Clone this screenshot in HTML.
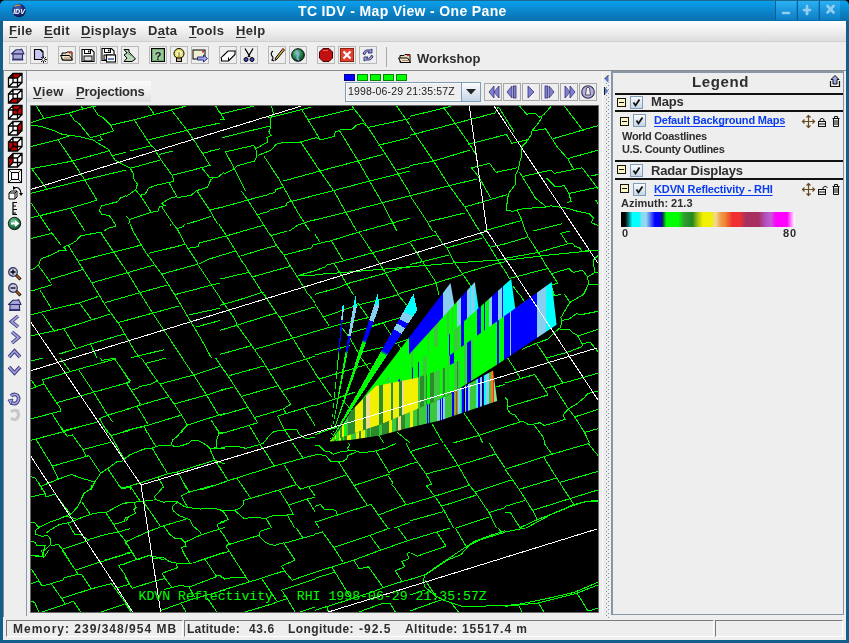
<!DOCTYPE html>
<html><head><meta charset="utf-8">
<style>
*{margin:0;padding:0;box-sizing:border-box}
html,body{width:849px;height:643px;overflow:hidden;background:#135e8b;font-family:"Liberation Sans",sans-serif}
.a{position:absolute}
.mi,.lt,.st,#ttext,#t_combo{will-change:transform}
#title{left:0;top:0;width:849px;height:21px;background:linear-gradient(#0b9fec,#0a86cc 50%,#0b6fae);border-top:1px solid #1a6a90;border-radius:5px 5px 0 0}
#ttext{left:298px;top:3px;white-space:nowrap;color:#fff;font-weight:bold;font-size:14px;letter-spacing:0.35px}
.wb{top:1px;width:21px;height:19px;background:linear-gradient(#2bb0f4,#0d7ec4);border-left:1px solid #0b5f94}
#menubar{left:3px;top:21px;width:843px;height:20px;background:linear-gradient(#ffffff,#f3f3f3 40%,#dedede)}
.mi{top:23px;font-size:13px;font-weight:bold;color:#2e2e2e;letter-spacing:0.3px}
.mi u{text-decoration:underline;text-underline-offset:1.5px;text-decoration-thickness:1px}
#toolbar{left:3px;top:41px;width:843px;height:30px;background:#eeeeee;border-top:1px solid #cfcfcf}
.tb{top:46px;width:18px;height:18px;border:1px solid #b9b9b9;background:#eeeeee}
#main{left:3px;top:70px;width:843px;height:549px;background:#eeeeee;border-top:1px solid #8c8c8c}
#status{left:3px;top:619px;width:843px;height:21px;background:#eeeeee}
.sb{top:620px;height:17px;border-top:1px solid #7a7a7a;border-left:1px solid #7a7a7a;border-right:1px solid #fff;border-bottom:1px solid #fff}
.st{top:622px;font-size:12px;font-weight:bold;color:#2e2e2e;white-space:nowrap}
#map{left:30px;top:105px;width:569px;height:508px;background:#000;border:1px solid #6a6a6a;overflow:hidden}
#legend{left:611px;top:71px;width:233px;height:544px;background:#eeeeee;border-left:2px solid #8797a8;border-top:2px solid #8797a8;border-right:1px solid #8797a8;border-bottom:1px solid #8797a8}
.lt{font-weight:bold;color:#2e2e2e;white-space:nowrap}
.hl{height:2px;background:#111}
.cb{width:13px;height:13px;border:1px solid #7f9db9;background:linear-gradient(#fdfdfd,#c9d8e8)}
.col{width:9px;height:9px;border:1px solid #111;background:#fbf5c0}
</style></head><body>
<div class="a" style="left:0;top:0;width:5px;height:5px;background:#000"></div><div class="a" style="left:844px;top:0;width:5px;height:5px;background:#000"></div>
<div id="title" class="a"></div>
<div id="ttext" class="a"><span id="t_title">TC IDV - Map View - One Pane</span></div>
<div class="a wb" style="left:775px"></div>
<div class="a wb" style="left:797px"></div>
<div class="a wb" style="left:819px"></div>

<div id="menubar" class="a"></div>
<div class="a mi" id="t_file" style="left:9px"><u>F</u>ile</div>
<div class="a mi" id="t_edit" style="left:44px"><u>E</u>dit</div>
<div class="a mi" id="t_disp" style="left:81px"><u>D</u>isplays</div>
<div class="a mi" id="t_data" style="left:148px">D<u>a</u>ta</div>
<div class="a mi" id="t_tools" style="left:189px"><u>T</u>ools</div>
<div class="a mi" id="t_help" style="left:236px"><u>H</u>elp</div>

<div id="toolbar" class="a"></div>
<div class="a tb" style="left:9px"></div>
<div class="a tb" style="left:30px"></div>
<div class="a tb" style="left:58px"></div>
<div class="a tb" style="left:79px"></div>
<div class="a tb" style="left:100px"></div>
<div class="a tb" style="left:121px"></div>
<div class="a tb" style="left:149px"></div>
<div class="a tb" style="left:170px"></div>
<div class="a tb" style="left:191px"></div>
<div class="a tb" style="left:219px"></div>
<div class="a tb" style="left:240px"></div>
<div class="a tb" style="left:268px"></div>
<div class="a tb" style="left:289px"></div>
<div class="a tb" style="left:317px"></div>
<div class="a tb" style="left:338px"></div>
<div class="a tb" style="left:359px"></div>
<div class="a" style="left:386px;top:47px;width:1px;height:20px;background:#a8a8a8"></div>
<div class="a lt" id="t_ws" style="left:417px;top:51px;font-size:13px">Workshop</div>

<div id="main" class="a"></div>
<div class="a" style="left:3px;top:71px;width:1px;height:546px;background:#888"></div>
<div class="a" style="left:26px;top:71px;width:1px;height:545px;background:#8a9aab"></div>
<div class="a" style="left:27px;top:81px;width:124px;height:21px;background:linear-gradient(#fafafa,#f0f0f0 50%,#dcdcdc)"></div>
<div class="a mi" id="t_view" style="left:33px;top:84px"><u>V</u>iew</div>
<div class="a mi" id="t_proj" style="left:76px;top:84px;letter-spacing:-0.2px"><u>P</u>rojections</div>

<div class="a" style="left:602px;top:72px;width:1px;height:544px;background:#fbfbfb"></div>
<div id="map" class="a"></div>
<svg class="a" style="left:31px;top:106px" width="567" height="506" viewBox="31 106 567 506">
<g fill="none" stroke="#00ff00" stroke-width="1" shape-rendering="crispEdges">
<polyline points="36.2,106.0 44.0,118.5"/>
<polyline points="31.1,122.5 44.0,118.5 69.2,113.0 82.6,109.0 95.5,106.0"/>
<polyline points="81.5,106.0 82.6,109.0"/>
<polyline points="69.2,113.0 74.8,120.8 79.2,123.6 90.4,137.6"/>
<polyline points="92.7,106.8 98.3,115.2 102.7,117.4 110.6,125.3 113.4,130.9 99.4,135.3 90.4,137.6"/>
<polyline points="110.6,125.3 125.0,121.9"/>
<polyline points="31.1,125.3 41.2,126.4 54.6,130.9 62.4,134.4 78.1,136.4 92.7,139.8 108.3,149.3 110.6,153.2 115.0,159.9 125.0,165.5 126.0,166.2"/>
<polyline points="126.0,195.7 120.6,198.0 117.3,201.8 101.6,205.8 99.4,210.3 101.6,214.1 109.5,215.9 112.8,220.4 116.2,226.0 108.3,228.2 103.9,231.0"/>
<polyline points="99.4,135.3 102.2,139.8 97.7,140.4"/>
<polyline points="31.1,146.5 58.0,139.8 69.2,135.9"/>
<polyline points="58.0,139.8 72.5,161.1 84.8,180.1 97.1,200.2"/>
<polyline points="30.0,168.9 72.5,161.1 108.3,151.0"/>
<polyline points="125.0,121.9 134.1,119.7 173.2,109.6 185.5,106.2"/>
<polyline points="148.6,106.2 154.2,114.1"/>
<polyline points="171.0,109.6 186.7,129.7 196.7,144.3 200.8,151.0"/>
<polyline points="215.8,106.2 220.0,113.0"/>
<polyline points="111.7,155.9 126.0,152.2"/>
<polyline points="130.5,151.0 152.0,145.4"/>
<polyline points="134.1,119.7 150.9,145.4 157.4,151.0"/>
<polyline points="148.6,139.8 186.7,130.4 220.0,123.0"/>
<polyline points="30.0,193.5 86.0,179.6 126.0,170.0"/>
<polyline points="210.6,151.0 220.0,148.8"/>
<polyline points="31.1,167.8 46.8,189.0"/>
<polyline points="30.0,201.4 50.1,231.0"/>
<polyline points="30.0,218.1 70.3,208.1 97.1,200.2"/>
<polyline points="70.3,208.1 84.8,231.0"/>
<polyline points="170.1,224.0 171.0,226.1"/>
<polyline points="130.3,224.0 133.0,231.0"/>
<polyline points="38.8,485.0 41.2,486.8 45.3,493.8 45.9,496.8"/>
<polyline points="31.2,496.8 41.8,494.4 45.3,493.8"/>
<polyline points="45.9,496.8 55.3,494.2 70.6,514.4"/>
<polyline points="91.2,485.0 91.2,488.5 84.2,493.2 81.8,498.0 80.6,501.5 77.1,507.4 71.2,513.9 65.3,516.2 58.3,519.2 50.0,522.1 40.6,526.8 36.5,529.2 35.3,532.1 35.9,534.5 41.8,536.2 47.7,535.6 50.6,539.2 50.0,545.1 46.5,548.6 43.0,551.0 44.1,556.8 36.5,555.7 31.2,555.7"/>
<polyline points="81.8,501.5 85.4,507.4 90.1,513.9"/>
<polyline points="66.5,516.2 77.1,519.2 93.6,513.3 106.6,512.1 123.1,503.3 130.0,502.1"/>
<polyline points="45.9,533.3 50.6,529.8 59.4,524.5 68.9,522.7 77.1,519.7"/>
<polyline points="31.2,522.1 34.7,522.7 38.2,526.8 40.6,526.8"/>
<polyline points="67.7,522.7 70.0,526.2 74.8,534.5 81.8,535.1 87.7,539.8"/>
<polyline points="87.7,539.8 105.4,534.5 118.3,532.1 130.0,528.6"/>
<polyline points="105.4,512.1 113.6,524.5 118.3,532.1 124.2,539.2 130.0,548.6"/>
<polyline points="113.6,524.5 124.2,521.5 125.4,518.0 130.0,516.2"/>
<polyline points="31.2,541.5 34.7,542.1 37.1,545.7 45.3,545.7 43.0,551.0"/>
<polyline points="51.2,545.7 58.3,544.5 62.4,549.2 88.9,540.4"/>
<polyline points="62.4,549.2 68.9,560.0"/>
<polyline points="105.4,560.0 130.0,552.7"/>
<polyline points="118.3,485.0 121.3,487.9 130.0,486.2"/>
<polyline points="125.0,487.4 130.3,486.2"/>
<polyline points="130.3,486.2 140.3,501.5"/>
<polyline points="162.7,485.0 163.3,486.8 156.8,494.4 154.4,496.8 156.2,499.7"/>
<polyline points="125.0,503.3 140.3,501.5 156.2,499.7"/>
<polyline points="156.2,499.7 163.3,502.1 176.8,501.5 183.9,506.2 187.4,507.4 200.4,509.1 212.2,508.0 222.8,510.3 225.0,513.3"/>
<polyline points="185.1,485.0 189.2,492.1"/>
<polyline points="214.5,485.0 189.2,492.1 181.5,495.6 183.9,500.9 187.4,506.8"/>
<polyline points="134.4,503.3 136.2,507.4 133.8,509.7 135.6,513.3 129.7,516.2 126.2,520.3"/>
<polyline points="143.3,501.5 160.3,526.2"/>
<polyline points="176.8,502.7 172.1,506.8 173.3,510.9 179.2,515.6 189.8,519.7 193.3,526.2 200.4,532.1 201.6,535.1"/>
<polyline points="125.0,542.1 148.6,531.5 163.9,525.6 186.2,519.2"/>
<polyline points="163.9,526.2 169.8,534.5 174.5,538.0 180.4,538.0 185.1,542.7 186.2,546.2 181.5,547.4 183.9,553.3 187.4,560.0"/>
<polyline points="185.1,542.1 200.4,535.1 219.2,529.2 225.0,527.4"/>
<polyline points="216.9,524.5 225.0,521.5"/>
<polyline points="216.9,524.5 219.2,529.2 225.0,536.8"/>
<polyline points="125.0,542.1 132.1,552.1 136.8,560.0"/>
<polyline points="125.0,553.3 132.1,552.1"/>
<polyline points="136.8,560.0 148.6,555.7 155.6,556.8 163.9,560.0"/>
<polyline points="201.6,560.0 225.0,552.1"/>
<polyline points="31.2,555.3 38.2,556.5 44.1,557.1 48.8,550.0"/>
<polyline points="41.8,550.0 42.4,554.7 44.1,557.1"/>
<polyline points="61.8,550.0 75.9,570.6 78.3,574.7"/>
<polyline points="75.9,570.0 103.0,561.2 130.0,552.9"/>
<polyline points="31.2,568.8 42.4,585.9"/>
<polyline points="31.2,583.6 38.2,581.2 42.4,585.9"/>
<polyline points="42.4,585.9 51.2,583.6 63.0,580.0 64.2,577.7 78.3,574.1 81.8,574.7 91.2,588.9"/>
<polyline points="51.2,583.6 62.4,599.5 65.3,604.2"/>
<polyline points="61.8,598.3 91.2,588.9 111.3,583.6"/>
<polyline points="111.3,583.6 124.2,600.6 130.0,610.1"/>
<polyline points="118.3,565.3 124.2,564.1 130.0,561.8"/>
<polyline points="118.3,565.3 124.2,573.6 128.9,583.0"/>
<polyline points="117.2,587.7 130.0,584.2"/>
<polyline points="31.2,601.2 34.7,602.4 38.8,612.0"/>
<polyline points="41.8,612.0 65.3,604.2 73.6,601.2 80.6,612.0"/>
<polyline points="100.7,612.0 124.2,604.2"/>
<polyline points="130.3,550.0 136.8,559.4"/>
<polyline points="125.0,563.5 136.8,559.4 149.1,555.3 154.4,558.8 162.7,557.1 169.8,561.8 176.2,563.0 177.4,567.7 162.7,573.0"/>
<polyline points="125.0,553.5 130.3,552.4"/>
<polyline points="182.1,550.0 184.5,554.7 189.8,563.0"/>
<polyline points="176.8,563.5 192.7,563.0 205.1,558.8 225.0,552.4"/>
<polyline points="205.1,559.4 215.7,575.3 220.4,575.3 225.0,579.4"/>
<polyline points="162.1,573.6 165.6,578.9 172.1,587.7"/>
<polyline points="125.0,577.1 132.1,588.3"/>
<polyline points="132.1,588.3 154.4,581.2 165.6,578.3"/>
<polyline points="163.9,589.5 180.4,585.3 189.2,587.1 216.9,576.5"/>
<polyline points="189.2,587.1 194.5,597.1"/>
<polyline points="160.3,610.7 191.0,599.5 225.0,590.0"/>
<polyline points="125.0,603.0 130.9,612.0"/>
<polyline points="181.5,604.2 186.2,612.0"/>
<polyline points="207.4,598.3 216.9,612.0"/>
<polyline points="220.0,114.1 253.6,106.2"/>
<polyline points="220.0,112.5 224.0,119.2 220.0,120.1"/>
<polyline points="271.5,106.2 273.7,114.1"/>
<polyline points="268.1,117.9 310.6,107.4"/>
<polyline points="222.2,137.6 270.4,125.9"/>
<polyline points="273.7,114.1 270.4,118.5 271.0,126.4 268.8,132.0 271.0,135.3 267.0,137.6 267.4,142.0 255.8,148.8 256.9,155.5 254.7,161.1 237.9,165.5 232.3,170.0 224.0,173.8"/>
<polyline points="253.6,145.4 224.5,152.1"/>
<polyline points="253.6,145.4 255.8,148.8"/>
<polyline points="258.0,155.5 271.5,149.9 276.0,144.3 284.9,142.0 291.6,142.5 300.6,142.0 316.2,137.6 320.7,139.8 334.1,136.5 335.3,132.0 340.9,129.7 352.1,129.1 356.5,125.3 362.1,123.0 367.7,126.4"/>
<polyline points="301.7,109.6 319.6,138.7"/>
<polyline points="352.1,106.2 363.2,120.8 368.8,128.6 385.6,154.4 399.1,175.6 410.0,193.5"/>
<polyline points="396.8,106.2 410.0,125.3"/>
<polyline points="339.7,130.9 358.8,162.2 372.2,185.7 383.4,204.7 396.8,230.9"/>
<polyline points="300.6,142.0 318.5,168.9 334.1,191.3 345.3,211.4 356.5,230.9"/>
<polyline points="263.6,155.5 278.2,177.9 287.1,193.5 297.2,211.4 309.5,230.9"/>
<polyline points="225.6,152.1 235.7,171.1 245.7,191.0"/>
<polyline points="308.4,119.7 353.2,108.9"/>
<polyline points="367.7,127.5 410.0,118.5"/>
<polyline points="377.8,145.4 410.0,137.6"/>
<polyline points="282.7,181.2 319.6,171.1 357.6,161.1 383.4,154.4"/>
<polyline points="396.8,170.0 410.0,166.7"/>
<polyline points="269.0,194.1 274.8,192.4 276.0,189.5 282.7,187.3"/>
<polyline points="269.0,210.4 286.0,205.8 287.1,202.5 330.8,191.3 368.8,181.2 410.0,171.1"/>
<polyline points="289.4,230.9 298.3,224.9 308.4,221.5 345.3,212.5 383.4,202.5 410.0,195.8"/>
<polyline points="363.2,230.9 410.0,218.1"/>
<polyline points="410.0,116.3 451.4,106.2"/>
<polyline points="443.6,107.4 454.8,123.0 470.4,145.4 477.1,156.6"/>
<polyline points="410.0,135.3 495.0,113.0 498.4,106.7"/>
<polyline points="498.4,106.7 514.1,132.0"/>
<polyline points="468.2,144.3 507.4,134.2"/>
<polyline points="519.7,106.2 526.4,114.1 535.3,113.4 539.8,117.4 544.3,114.1 551.0,106.2"/>
<polyline points="542.1,117.4 537.6,124.1 532.0,130.9 530.9,135.3 526.4,142.0 521.9,146.5 521.9,155.5 519.7,162.2 518.5,168.9 515.2,175.6 515.2,184.6 508.5,193.5 507.4,200.2 506.2,210.3 513.0,211.4 519.7,209.2 530.9,208.1 546.5,207.0 551.0,205.8 566.7,208.1 577.9,211.4 589.1,213.7 593.5,218.1 591.3,222.6 599.1,226.0"/>
<polyline points="410.0,126.4 433.5,161.1 449.2,185.7 464.8,207.0 479.4,230.9"/>
<polyline points="410.0,195.8 427.9,222.6 432.4,230.9"/>
<polyline points="410.0,165.5 433.5,161.1 470.4,149.9"/>
<polyline points="471.5,167.8 479.4,177.9 490.6,198.0"/>
<polyline points="471.5,167.8 489.5,163.3 496.2,172.3 517.4,167.8"/>
<polyline points="410.0,195.8 449.2,185.7 477.1,179.0"/>
<polyline points="464.8,207.0 507.4,194.6"/>
<polyline points="429.0,221.5 464.8,213.0"/>
<polyline points="483.9,230.9 521.9,220.4"/>
<polyline points="517.4,210.3 521.9,220.4 525.3,230.9"/>
<polyline points="506.2,134.2 511.8,143.2 527.5,139.8"/>
<polyline points="553.2,138.7 599.1,125.3"/>
<polyline points="545.4,128.6 557.7,147.6 567.8,158.8 573.4,168.9"/>
<polyline points="582.3,167.8 599.1,190.2"/>
<polyline points="564.4,106.2 583.5,130.9"/>
<polyline points="532.0,130.9 546.5,128.6"/>
<polyline points="566.7,158.8 599.1,149.9"/>
<polyline points="521.9,176.7 551.0,170.0 554.4,173.4 582.3,167.8"/>
<polyline points="546.5,177.9 551.0,182.3 555.5,186.8 564.4,185.7 568.9,193.5 571.1,201.4 566.7,202.5"/>
<polyline points="519.7,172.3 535.3,198.0 546.5,207.0"/>
<polyline points="568.9,193.5 599.1,186.8"/>
<polyline points="591.3,175.6 599.1,174.5"/>
<polyline points="595.8,200.2 599.1,205.8"/>
<polyline points="533.1,230.9 562.2,223.7"/>
<polyline points="30.0,238.8 52.4,233.2"/>
<polyline points="51.3,232.1 61.3,245.5"/>
<polyline points="30.0,270.2 34.5,268.6 39.0,264.1 40.7,259.0 52.4,254.5 60.2,250.0 66.9,250.7 63.6,247.1 70.3,244.4 75.9,241.1 80.4,235.9 88.2,234.4 101.6,232.1"/>
<polyline points="100.5,232.1 113.9,252.3 127.4,272.4 139.7,292.5 153.1,313.8 164.3,330.6 182.2,357.9"/>
<polyline points="133.0,231.0 146.4,253.4 162.1,274.6 175.5,295.9 186.7,314.9 204.6,345.1 211.3,357.9"/>
<polyline points="197.5,264.0 197.9,264.6 220.2,298.1"/>
<polyline points="68.0,244.9 81.5,266.8 91.5,282.5 105.0,304.9 119.5,325.0 135.2,351.9 139.7,357.9"/>
<polyline points="37.8,264.6 51.3,283.6"/>
<polyline points="40.1,290.3 51.3,308.2"/>
<polyline points="42.3,313.8 54.6,331.7"/>
<polyline points="63.6,328.4 75.9,348.5"/>
<polyline points="79.2,302.6 91.5,319.4"/>
<polyline points="90.4,344.0 97.1,357.9"/>
<polyline points="78.1,261.2 141.9,244.9"/>
<polyline points="148.6,253.4 171.0,247.9"/>
<polyline points="51.3,279.1 82.6,269.5"/>
<polyline points="91.5,282.9 154.2,265.0"/>
<polyline points="162.1,274.0 198.3,264.0"/>
<polyline points="30.0,291.4 52.4,284.7"/>
<polyline points="105.0,302.6 166.5,285.2"/>
<polyline points="174.4,294.8 220.0,282.9"/>
<polyline points="30.0,314.9 80.4,302.6 98.3,296.4"/>
<polyline points="117.3,322.8 178.8,306.0"/>
<polyline points="188.9,314.9 220.0,308.2"/>
<polyline points="30.0,336.2 64.7,328.4 109.5,314.3"/>
<polyline points="59.1,354.1 90.4,344.0 124.0,334.0"/>
<polyline points="130.7,357.9 164.3,349.6"/>
<polyline points="195.6,327.2 220.0,320.5"/>
<polyline points="244.4,264.0 249.1,272.4 252.4,276.9 263.6,295.0"/>
<polyline points="269.0,233.2 271.5,236.0 276.5,245.5 284.3,255.6 290.5,266.2 303.3,286.4 308.4,295.0"/>
<polyline points="271.5,235.5 287.1,231.0"/>
<polyline points="269.0,247.6 276.5,245.5"/>
<polyline points="284.3,255.0 311.7,247.8 312.8,245.0 315.0,244.4"/>
<polyline points="220.0,279.1 248.5,272.4"/>
<polyline points="252.4,276.9 290.5,266.2"/>
<polyline points="297.7,275.7 315.0,270.7"/>
<polyline points="298.3,275.7 315.0,275.2"/>
<polyline points="253.6,295.0 263.6,292.0"/>
<polyline points="315.0,234.4 320.0,242.2"/>
<polyline points="315.0,244.4 331.8,240.5 358.6,232.1 362.0,231.0"/>
<polyline points="358.6,231.6 372.6,252.8 385.5,272.9 398.3,294.2"/>
<polyline points="331.2,240.5 343.0,260.1"/>
<polyline points="315.0,270.7 325.6,266.8 326.2,265.1 334.0,263.4 372.6,252.8 410.0,242.2"/>
<polyline points="334.0,263.4 340.7,274.1 353.6,295.0"/>
<polyline points="315.0,274.6 338.5,272.9 377.6,269.6 410.0,267.0"/>
<polyline points="347.4,283.6 384.4,273.5 402.2,267.9 410.0,266.2"/>
<polyline points="315.0,294.2 337.4,288.0 347.4,283.6"/>
<polyline points="398.9,293.6 410.0,290.3"/>
<polyline points="220.0,298.5 228.9,310.2 235.7,320.8 236.8,324.8 251.3,344.9 260.3,358.0"/>
<polyline points="220.0,305.2 234.5,301.3 256.9,294.0"/>
<polyline points="264.2,294.0 265.9,297.4 275.9,312.5 279.8,317.5 292.7,338.2 305.0,358.0"/>
<polyline points="220.0,330.4 236.8,325.3 275.9,313.0"/>
<polyline points="279.8,317.5 315.0,306.9"/>
<polyline points="220.0,354.4 251.9,345.5"/>
<polyline points="254.7,349.4 292.7,338.2 315.0,331.5"/>
<polyline points="308.4,294.0 315.0,302.9"/>
<polyline points="309.5,358.0 315.0,356.1"/>
<polyline points="315.0,304.1 329.5,326.4"/>
<polyline points="323.9,316.9 355.3,305.7 382.1,299.0 398.9,294.6"/>
<polyline points="397.8,294.6 406.7,305.2"/>
<polyline points="357.5,302.9 368.7,318.0"/>
<polyline points="315.0,331.5 340.7,324.2 368.7,317.5"/>
<polyline points="372.0,325.9 401.1,317.5"/>
<polyline points="340.7,326.4 349.7,337.6 358.6,353.3"/>
<polyline points="383.2,323.1 391.1,334.8"/>
<polyline points="350.8,332.6 365.3,328.7 383.2,323.1"/>
<polyline points="315.0,355.0 349.7,345.5"/>
<polyline points="362.0,352.2 385.5,346.6 410.0,338.7"/>
<polyline points="397.8,344.3 402.2,349.9"/>
<polyline points="434.6,231.0 442.4,243.3 446.9,247.8 454.7,262.9 462.6,274.1 471.0,286.4"/>
<polyline points="410.0,241.6 436.3,234.9"/>
<polyline points="446.9,247.8 481.6,238.3"/>
<polyline points="480.5,232.1 490.0,247.2 498.4,261.2 505.0,270.7"/>
<polyline points="410.6,243.3 424.5,264.6 435.7,281.9 439.1,295.0"/>
<polyline points="490.0,247.2 505.0,243.9"/>
<polyline points="410.0,264.6 449.1,255.0"/>
<polyline points="410.0,266.8 454.7,262.9 505.0,259.5"/>
<polyline points="462.6,273.5 497.2,263.4 505.0,261.8"/>
<polyline points="410.0,290.3 432.4,284.1 462.6,274.6"/>
<polyline points="525.7,231.0 527.9,236.6 538.6,252.8 547.5,267.9 557.6,283.0 551.4,285.3"/>
<polyline points="505.0,243.9 527.4,237.2"/>
<polyline points="505.0,258.4 538.6,252.3 567.6,243.9 572.7,243.3 574.9,246.7 578.8,247.2 582.2,251.1 597.8,250.6"/>
<polyline points="505.0,260.3 552.0,254.7 587.8,251.1 598.0,250.0"/>
<polyline points="560.9,233.2 569.9,231.0"/>
<polyline points="560.9,233.2 567.1,243.3"/>
<polyline points="505.0,270.7 509.5,278.5"/>
<polyline points="509.5,278.5 547.5,268.5"/>
<polyline points="552.0,273.5 568.8,268.5 573.2,272.4 582.2,270.1 587.8,276.9 594.5,272.9 598.0,272.4"/>
<polyline points="587.8,276.9 588.3,284.7 583.3,295.0"/>
<polyline points="594.5,272.4 593.4,260.1 598.0,255.6"/>
<polyline points="588.3,284.7 598.0,284.1"/>
<polyline points="512.8,285.8 519.5,295.0"/>
<polyline points="550.9,285.3 554.2,295.0"/>
<polyline points="519.5,294.0 525.7,303.5"/>
<polyline points="553.1,295.7 560.9,294.6"/>
<polyline points="564.3,294.0 569.9,302.4"/>
<polyline points="569.9,302.4 583.3,294.6"/>
<polyline points="569.9,302.4 560.9,317.5 562.0,321.4 560.4,327.6 554.2,332.6 547.5,339.3 536.3,343.2 521.8,349.4"/>
<polyline points="562.0,320.3 568.8,319.2 576.6,313.6 581.1,314.7 598.0,311.3"/>
<polyline points="560.4,329.8 568.8,329.2 573.2,333.1 578.8,335.9 598.0,329.2"/>
<polyline points="577.7,335.9 582.2,344.3 583.3,346.6"/>
<polyline points="536.3,343.2 546.4,358.0"/>
<polyline points="582.2,343.8 590.0,342.1 598.0,351.6"/>
<polyline points="546.4,358.0 567.6,352.2 582.2,346.6"/>
<polyline points="31.2,360.9 43.0,358.0"/>
<polyline points="60.0,358.0 70.0,371.0"/>
<polyline points="100.7,358.0 101.8,360.4 116.0,358.0"/>
<polyline points="42.4,379.8 78.3,369.2 114.8,359.2"/>
<polyline points="114.8,359.2 123.1,371.0 130.0,381.6"/>
<polyline points="31.2,379.8 35.9,386.9"/>
<polyline points="31.2,388.6 44.1,383.9"/>
<polyline points="42.4,379.8 44.1,383.9"/>
<polyline points="44.1,383.9 56.5,402.8 60.6,408.6 60.6,411.6"/>
<polyline points="78.3,369.2 93.6,392.2 107.7,415.1 112.4,421.6"/>
<polyline points="56.5,402.8 93.6,392.2 130.0,382.1"/>
<polyline points="126.6,382.7 130.0,388.6"/>
<polyline points="31.2,418.7 51.8,413.4 60.6,411.0"/>
<polyline points="51.8,413.4 63.0,431.0 64.2,433.0"/>
<polyline points="99.5,418.7 107.7,415.1 130.0,408.6"/>
<polyline points="61.8,431.0 97.1,422.2"/>
<polyline points="99.5,418.7 107.7,433.0"/>
<polyline points="120.7,433.0 130.0,429.8"/>
<polyline points="141.5,358.0 156.8,380.4 160.3,384.5 174.5,404.5 181.5,415.1 187.4,425.1 183.3,428.7 181.5,433.0"/>
<polyline points="146.2,363.3 166.2,358.0"/>
<polyline points="182.1,358.0 193.3,374.5 206.3,394.5 218.6,415.1"/>
<polyline points="215.7,358.0 225.0,372.1"/>
<polyline points="125.0,373.3 130.3,381.0 126.2,382.7"/>
<polyline points="126.2,382.7 140.3,403.9 137.4,406.9 148.0,424.0"/>
<polyline points="132.1,389.2 136.8,388.9 140.3,386.3 150.3,384.5 156.8,381.0"/>
<polyline points="160.3,383.9 193.3,375.1 220.4,366.2"/>
<polyline points="125.0,409.8 140.3,405.1 168.6,396.9"/>
<polyline points="174.5,403.9 206.3,395.1 225.0,389.2"/>
<polyline points="125.0,431.0 144.4,426.3 181.5,415.1"/>
<polyline points="187.4,425.1 218.6,415.1 225.0,413.4"/>
<polyline points="144.4,426.3 146.8,433.0"/>
<polyline points="211.0,419.8 219.2,433.0"/>
<polyline points="59.4,425.0 64.2,431.5 67.1,436.2 72.4,435.0 83.0,449.7 85.9,455.6"/>
<polyline points="31.2,440.3 64.2,431.5 85.4,425.0"/>
<polyline points="35.9,439.1 52.4,466.2 58.3,479.2"/>
<polyline points="82.4,449.7 111.3,442.1"/>
<polyline points="103.0,425.0 111.3,436.2 124.2,459.2"/>
<polyline points="111.3,435.6 130.0,430.3"/>
<polyline points="52.4,466.2 88.9,455.6 100.7,473.3 94.8,482.1 90.7,490.0"/>
<polyline points="124.2,459.2 130.0,454.4"/>
<polyline points="31.2,476.8 34.7,477.4 41.2,486.8 41.8,490.0"/>
<polyline points="41.2,486.2 58.3,479.2 71.2,474.5 83.0,478.6 94.8,482.1"/>
<polyline points="100.7,473.3 107.7,468.6 117.2,461.5 123.1,460.9"/>
<polyline points="107.7,468.6 121.3,488.6 130.0,487.4"/>
<polyline points="125.0,430.9 143.8,426.2 146.8,425.0"/>
<polyline points="143.8,426.2 155.6,446.2"/>
<polyline points="187.4,425.0 182.7,429.7 176.8,436.8 172.7,439.7 171.5,444.4 174.5,446.8 178.0,446.8 188.6,443.3 191.5,440.3 198.0,440.3 207.4,445.6 209.8,448.6 214.5,459.7 225.0,475.6"/>
<polyline points="125.0,458.6 130.9,454.4 143.8,449.1 152.1,448.0 159.2,445.6 171.5,445.0"/>
<polyline points="152.1,448.0 167.4,473.3"/>
<polyline points="136.8,483.9 167.4,473.9 176.8,472.1 214.5,460.3"/>
<polyline points="214.5,460.3 225.0,463.9"/>
<polyline points="209.8,449.1 225.0,448.0"/>
<polyline points="214.5,425.0 219.2,432.1 216.9,439.1 216.3,447.4 209.8,449.1"/>
<polyline points="219.2,433.2 225.0,432.1"/>
<polyline points="176.8,472.1 180.4,476.8 187.4,490.0"/>
<polyline points="125.0,487.4 136.8,483.9"/>
<polyline points="129.7,486.2 130.9,490.0"/>
<polyline points="158.0,477.4 163.9,487.4"/>
<polyline points="200.4,490.0 225.0,482.1"/>
<polyline points="220.7,365.3 227.9,375.8 241.1,396.3 254.3,417.4 257.6,422.7 249.1,425.4"/>
<polyline points="261.0,358.0 264.9,364.6 278.1,385.7 290.7,404.2 283.4,408.9 286.1,413.5 277.5,416.1"/>
<polyline points="228.6,375.8 264.3,365.9"/>
<polyline points="270.2,369.9 307.2,358.7 309.8,358.0"/>
<polyline points="306.5,359.3 315.0,372.5"/>
<polyline points="220.0,390.4 233.2,387.1"/>
<polyline points="241.8,396.3 278.1,385.7"/>
<polyline points="282.7,390.4 315.0,381.1"/>
<polyline points="220.0,415.5 247.7,407.5"/>
<polyline points="255.0,417.4 282.1,409.5"/>
<polyline points="286.1,413.5 315.0,404.9"/>
<polyline points="304.5,408.9 315.0,425.4"/>
<polyline points="220.0,434.0 249.1,425.4"/>
<polyline points="249.1,425.4 259.6,442.9"/>
<polyline points="277.5,416.1 284.7,430.0 292.0,441.2"/>
<polyline points="263.6,442.9 268.9,435.9 274.2,431.3 284.7,430.0 296.6,429.3 299.3,434.6 305.9,438.6 315.0,437.3"/>
<polyline points="315.0,373.2 332.2,397.6"/>
<polyline points="319.0,379.1 370.5,363.3"/>
<polyline points="361.2,358.0 370.5,371.2"/>
<polyline points="315.0,405.6 354.6,392.3"/>
<polyline points="342.7,400.3 352.0,410.8"/>
<polyline points="315.0,434.6 337.5,426.7"/>
<polyline points="378.4,434.6 383.7,442.9"/>
<polyline points="396.9,432.0 410.0,442.9"/>
<polyline points="220.0,448.3 227.9,446.3 239.8,447.0 245.8,448.3 259.6,444.6 263.6,443.0"/>
<polyline points="259.6,444.3 264.3,450.3 274.2,466.1"/>
<polyline points="292.7,443.0 303.2,458.2"/>
<polyline points="220.0,483.3 274.2,466.1 315.0,454.9"/>
<polyline points="220.0,467.4 227.9,480.6"/>
<polyline points="237.2,478.7 250.4,497.8"/>
<polyline points="284.1,464.8 296.0,484.0 300.6,489.2 308.5,486.6 315.0,485.3"/>
<polyline points="243.1,500.5 279.4,489.9 296.0,484.6"/>
<polyline points="279.4,490.6 288.7,505.1 293.3,514.3 287.4,515.0"/>
<polyline points="288.7,505.1 307.2,499.1 315.0,497.2"/>
<polyline points="308.5,486.6 315.0,495.8"/>
<polyline points="307.2,499.1 315.0,511.7"/>
<polyline points="243.1,500.5 243.8,504.4 239.8,508.4 234.5,510.4 222.6,511.0 220.0,510.4"/>
<polyline points="222.6,511.0 225.3,514.3 228.6,519.6 220.0,522.3"/>
<polyline points="234.5,510.4 243.8,518.3 254.3,517.6 266.2,518.3 274.2,515.0 287.4,515.0 293.3,514.3"/>
<polyline points="266.2,518.3 271.5,527.9"/>
<polyline points="287.4,515.0 294.6,527.9"/>
<polyline points="315.0,445.0 319.0,445.6 324.2,450.9 329.5,451.6 333.5,454.2 341.4,451.6 354.6,450.3 361.2,452.9 375.8,450.9 385.0,448.3 395.6,443.7"/>
<polyline points="348.7,443.0 349.3,445.6 347.4,448.3 348.7,450.3"/>
<polyline points="315.0,454.2 325.6,455.5 330.9,461.5 342.7,461.5 346.7,458.9 348.0,455.5 357.3,451.6"/>
<polyline points="338.8,462.2 346.7,474.7 367.2,505.1"/>
<polyline points="375.8,450.9 389.6,473.4"/>
<polyline points="387.7,475.4 392.9,482.6 391.6,484.6 394.3,487.3 406.1,504.4"/>
<polyline points="315.0,485.3 346.7,474.7"/>
<polyline points="354.6,485.3 389.6,474.0"/>
<polyline points="389.6,471.4 410.0,464.1"/>
<polyline points="406.1,443.0 410.0,450.9"/>
<polyline points="315.0,506.4 320.3,504.4 324.2,509.1 332.2,509.1 336.1,511.0 337.5,515.0"/>
<polyline points="315.0,522.3 337.5,515.0 371.1,504.4"/>
<polyline points="371.1,504.4 378.4,515.0 387.7,527.9"/>
<polyline points="378.4,515.0 406.1,504.4 410.0,503.8"/>
<polyline points="315.0,520.9 319.0,527.9"/>
<polyline points="394.3,527.9 410.0,522.3"/>
<polyline points="220.7,530.7 229.4,544.1 226.0,546.1"/>
<polyline points="226.0,545.4 258.8,535.4"/>
<polyline points="258.8,535.4 260.2,531.3 270.2,528.0"/>
<polyline points="258.8,535.4 264.2,541.4 269.5,544.1 274.9,545.4 283.6,542.7 295.0,560.1"/>
<polyline points="283.6,543.4 303.0,538.0 315.0,534.7"/>
<polyline points="296.3,528.0 303.0,538.0"/>
<polyline points="220.0,554.1 228.7,551.4"/>
<polyline points="226.0,546.1 248.8,581.5"/>
<polyline points="220.0,576.2 224.0,578.2 246.8,577.5"/>
<polyline points="220.0,590.9 261.5,578.2 284.3,570.8"/>
<polyline points="295.0,560.1 281.6,566.2 284.3,570.8 292.3,580.2 315.0,572.2"/>
<polyline points="261.5,578.2 273.5,596.3 276.9,601.0"/>
<polyline points="281.6,590.2 285.6,596.3 295.0,611.9"/>
<polyline points="281.6,590.2 315.0,578.9"/>
<polyline points="245.4,611.9 270.9,604.3 285.6,599.0"/>
<polyline points="300.3,611.9 315.0,607.0"/>
<polyline points="315.0,534.0 322.4,532.0 333.7,547.4 343.1,562.1"/>
<polyline points="333.7,547.4 369.9,535.4 390.0,528.0"/>
<polyline points="369.9,535.4 380.6,550.1"/>
<polyline points="398.0,528.0 407.4,540.7"/>
<polyline points="315.0,572.2 353.8,560.1 380.6,550.1 410.0,540.0"/>
<polyline points="353.8,560.1 359.2,568.8 368.5,566.8 383.3,587.6"/>
<polyline points="315.0,578.2 335.1,572.2"/>
<polyline points="331.7,566.8 335.1,572.2 350.5,597.6"/>
<polyline points="383.3,587.6 402.0,581.5 410.0,579.5"/>
<polyline points="402.0,581.5 395.3,570.8 404.7,566.8 402.0,561.5 408.7,558.8 407.4,553.4 410.0,552.1"/>
<polyline points="315.0,610.3 351.1,599.0 375.2,590.9 383.3,587.6"/>
<polyline points="327.0,607.0 328.4,611.9"/>
<polyline points="359.2,611.9 381.9,603.6 390.0,603.0 395.3,611.9"/>
<polyline points="431.8,423.4 443.0,442.9"/>
<polyline points="464.2,413.5 478.7,434.6 482.7,442.9"/>
<polyline points="453.6,442.9 481.3,434.6 505.0,426.7"/>
<polyline points="495.9,387.1 505.0,384.4"/>
<polyline points="507.6,358.0 516.2,371.2 520.2,378.5"/>
<polyline points="505.0,383.1 534.7,374.5"/>
<polyline points="534.7,374.5 547.9,394.3"/>
<polyline points="546.0,358.0 549.9,363.3 563.1,383.1"/>
<polyline points="546.0,388.4 563.1,383.1 584.3,377.2 598.0,373.2"/>
<polyline points="553.9,386.4 568.4,408.9 575.0,417.4 584.3,432.0 589.5,442.9"/>
<polyline points="507.6,406.9 547.9,395.0"/>
<polyline points="505.0,397.6 507.6,400.3 507.6,409.5 510.3,413.5 514.9,414.8 519.5,421.4 524.8,422.1 527.5,424.1 533.4,424.1 540.0,422.7 544.0,425.4 549.9,424.1 565.1,419.4 563.1,414.8 568.4,408.9 576.3,404.2 584.3,397.6 587.6,393.7 598.0,391.0"/>
<polyline points="505.0,426.7 519.5,422.1"/>
<polyline points="533.4,424.1 543.3,437.3 544.6,442.9"/>
<polyline points="575.0,416.8 598.0,409.5"/>
<polyline points="584.3,432.6 598.0,428.7"/>
<polyline points="410.0,451.6 438.4,443.0"/>
<polyline points="410.7,452.2 425.9,474.0 431.8,484.0 426.5,485.9 434.4,495.8 441.7,506.4 453.6,527.9"/>
<polyline points="410.0,464.1 416.6,462.2"/>
<polyline points="444.3,444.3 458.2,465.5 469.4,485.3 475.4,492.5 489.3,513.0 496.5,527.9"/>
<polyline points="425.9,474.0 458.2,465.5 495.2,454.2"/>
<polyline points="489.3,443.0 495.9,454.2 505.0,468.1"/>
<polyline points="410.0,503.8 433.8,496.5 469.4,485.3"/>
<polyline points="475.4,491.9 505.0,482.0"/>
<polyline points="441.0,506.4 476.1,495.2"/>
<polyline points="410.0,520.9 443.0,511.7"/>
<polyline points="489.3,512.4 505.0,507.7"/>
<polyline points="456.2,527.9 489.3,517.0"/>
<polyline points="544.0,443.0 551.9,454.2"/>
<polyline points="505.0,469.4 551.9,454.2 588.2,443.7"/>
<polyline points="588.2,443.7 598.0,455.5"/>
<polyline points="505.7,470.1 519.5,489.9 533.4,511.7 537.4,519.6"/>
<polyline points="544.0,457.5 559.2,482.0 573.7,504.4"/>
<polyline points="505.0,482.0 511.6,480.0"/>
<polyline points="519.5,489.2 556.5,478.0"/>
<polyline points="559.2,482.6 598.0,471.4"/>
<polyline points="505.0,506.4 524.8,500.5"/>
<polyline points="532.7,510.4 568.4,499.1 598.0,489.9"/>
<polyline points="505.0,513.0 510.3,512.4 519.5,526.9"/>
<polyline points="519.5,527.9 537.4,519.6 551.2,514.3 564.4,509.1 573.7,504.4 589.5,501.1 598.0,500.5"/>
<polyline points="526.1,527.9 539.3,520.9 553.9,513.0 567.1,507.7 584.3,501.8 598.0,501.1"/>
<polyline points="410.0,540.0 436.8,532.0 450.2,528.0"/>
<polyline points="436.8,532.0 446.1,546.1"/>
<polyline points="410.7,552.8 417.4,556.1 446.1,546.1"/>
<polyline points="455.5,528.0 466.2,546.7"/>
<polyline points="424.7,574.9 442.1,562.8 454.2,554.8 466.2,546.7 474.3,541.4 490.3,535.4 505.0,530.7"/>
<polyline points="426.1,574.2 447.5,560.1 460.9,554.8 468.9,545.4 479.6,540.0 501.0,533.4 505.0,532.7"/>
<polyline points="410.0,579.5 424.7,574.9"/>
<polyline points="424.7,574.9 423.4,581.5 424.7,586.9 434.1,594.9 443.5,600.3 462.2,606.3 474.3,607.0 490.3,605.6 505.0,605.0"/>
<polyline points="424.7,579.5 436.8,597.6"/>
<polyline points="410.0,594.9 424.7,590.2"/>
<polyline points="410.0,611.0 443.5,599.0"/>
<polyline points="451.5,603.0 458.2,611.9"/>
<polyline points="498.4,528.0 502.4,534.0"/>
<polyline points="505.0,532.0 525.1,528.0"/>
<polyline points="505.0,605.6 518.4,604.3 545.2,599.0 574.6,592.3 598.0,582.2"/>
<polyline points="505.0,606.3 538.5,603.0 576.0,593.6 598.0,584.9"/>
<polyline points="518.4,604.3 521.7,611.9"/>
<polyline points="538.5,603.0 543.8,611.9"/>
<polyline points="577.3,593.6 588.0,611.0 598.0,608.3"/>
<polyline points="218.8,224.0 226.5,235.9 243.6,264.0"/>
<polyline points="241.4,191.0 247.7,200.0 257.2,214.7 269.0,233.2"/>
<polyline points="224.0,206.7 247.7,200.0 269.0,194.4"/>
<polyline points="257.2,214.7 269.0,211.5"/>
<polyline points="173.4,224.0 177.1,228.9 185.3,244.2 198.2,264.0"/>
<polyline points="177.1,228.9 183.0,226.5 184.6,224.0"/>
<polyline points="171.0,248.0 185.3,244.2"/>
<polyline points="188.8,248.3 198.3,246.5 199.4,243.0 226.5,235.9 263.1,225.3"/>
<polyline points="198.7,264.0 207.7,259.5 234.8,251.2"/>
<polyline points="240.7,256.0 269.0,247.4"/>
<polyline points="126.0,165.9 130.3,168.3"/>
<polyline points="130.3,168.3 160.3,160.0"/>
<polyline points="155.6,151.2 161.5,160.6 172.1,175.3 173.9,180.6"/>
<polyline points="158.6,154.7 172.9,151.0"/>
<polyline points="201.1,151.0 202.7,153.5 209.8,165.3 201.6,167.7"/>
<polyline points="202.7,153.5 211.1,151.0"/>
<polyline points="172.1,175.3 201.6,167.7"/>
<polyline points="201.6,167.7 209.8,177.7 218.1,177.1 224.0,172.1"/>
<polyline points="130.3,168.3 133.2,173.6 133.8,178.9 137.4,184.2 135.6,190.0 128.5,194.8 126.0,197.3"/>
<polyline points="135.6,190.0 140.3,195.3 150.9,211.8"/>
<polyline points="140.3,195.3 145.0,194.2 148.6,188.3 155.6,185.3 169.2,182.4 173.9,181.2"/>
<polyline points="169.2,183.0 176.8,196.5"/>
<polyline points="176.8,196.5 169.8,198.3 161.5,203.6 165.0,205.4 159.2,207.1 158.0,211.2 150.9,212.4 143.8,214.8 129.7,219.5 126.0,215.8"/>
<polyline points="176.8,197.1 180.9,197.1 191.0,195.3 196.8,190.6 207.4,187.1 211.0,179.4 213.3,178.3"/>
<polyline points="161.5,206.5 173.2,224.0"/>
<polyline points="196.8,190.6 209.8,210.1 217.5,224.0"/>
<polyline points="209.8,210.1 224.0,206.7"/>
<polyline points="187.1,224.0 211.0,216.5"/>
<polyline points="129.7,219.5 128.7,224.0"/>
</g>
<defs>
<linearGradient id="gs0" gradientUnits="userSpaceOnUse" x1="330" y1="441.4" x2="343" y2="300.3"><stop offset="0" stop-color="#00ff00"/><stop offset="0.62" stop-color="#00ff00"/><stop offset="0.64" stop-color="#0000ff"/><stop offset="0.86" stop-color="#0000ff"/><stop offset="0.86" stop-color="#87cef0"/><stop offset="0.94" stop-color="#87cef0"/><stop offset="0.94" stop-color="#00ffff"/><stop offset="1" stop-color="#00ffff"/></linearGradient>
<linearGradient id="gs1" gradientUnits="userSpaceOnUse" x1="330" y1="441.4" x2="355.3" y2="295"><stop offset="0" stop-color="#00ff00"/><stop offset="0.6" stop-color="#00ff00"/><stop offset="0.62" stop-color="#0000ff"/><stop offset="0.72" stop-color="#0000ff"/><stop offset="0.72" stop-color="#87cef0"/><stop offset="0.92" stop-color="#87cef0"/><stop offset="0.92" stop-color="#00ffff"/><stop offset="1" stop-color="#00ffff"/></linearGradient>
<linearGradient id="gs2" gradientUnits="userSpaceOnUse" x1="330" y1="441.4" x2="377.7" y2="293.8"><stop offset="0" stop-color="#00ff00"/><stop offset="0.67" stop-color="#00ff00"/><stop offset="0.69" stop-color="#0000ff"/><stop offset="0.82" stop-color="#0000ff"/><stop offset="0.82" stop-color="#87cef0"/><stop offset="0.93" stop-color="#87cef0"/><stop offset="0.93" stop-color="#00ffff"/><stop offset="1" stop-color="#00ffff"/></linearGradient>
<linearGradient id="gs3" gradientUnits="userSpaceOnUse" x1="330" y1="441.4" x2="413.6" y2="293.8"><stop offset="0" stop-color="#00ff00"/><stop offset="0.6" stop-color="#00ff00"/><stop offset="0.62" stop-color="#0000ff"/><stop offset="0.76" stop-color="#0000ff"/><stop offset="0.76" stop-color="#87cef0"/><stop offset="0.8" stop-color="#87cef0"/><stop offset="0.8" stop-color="#0000ff"/><stop offset="0.83" stop-color="#0000ff"/><stop offset="0.83" stop-color="#87cef0"/><stop offset="0.88" stop-color="#87cef0"/><stop offset="0.88" stop-color="#00ffff"/><stop offset="1" stop-color="#00ffff"/></linearGradient>
<clipPath id="c0"><polygon points="330.0,441.4 450.5,283.0 454.5,306.0"/></clipPath>
<clipPath id="c1"><polygon points="330.0,441.4 474.8,282.0 479.0,311.0"/></clipPath>
<clipPath id="c2"><polygon points="330.0,441.4 511.2,279.0 516.2,315.5"/></clipPath>
<clipPath id="c8"><polygon points="330.0,441.4 551.7,282.0 556.6,324.7 496.5,365.0 457.0,390.0 440.0,399.2 410.0,412.0 380.0,424.7 352.0,434.0"/></clipPath>
<clipPath id="cy"><polygon points="330.0,441.4 340.0,430.0 351.0,411.0 376.0,386.0 416.0,378.0 440.0,370.0 460.0,360.0 460.0,388.0 422.0,408.0 380.0,424.7 352.0,434.0"/></clipPath>
<clipPath id="c9"><polygon points="330.0,441.4 352.0,434.0 380.0,424.7 410.0,412.0 440.0,399.2 493.2,370.5 497.2,401.0 440.0,420.4 410.0,427.5 380.0,435.5 352.0,439.7"/></clipPath>
</defs>
<g shape-rendering="crispEdges"><polygon points="330.0,441.4 343.0,300.3 343.9,308.6" fill="url(#gs0)"/>
<polygon points="330.0,441.4 355.3,295.0 356.9,306.2" fill="url(#gs1)"/>
<polygon points="330.0,441.4 377.7,293.8 379.5,305.6" fill="url(#gs2)"/>
<polygon points="330.0,441.4 413.6,293.8 417.2,310.3" fill="url(#gs3)"/>
<g clip-path="url(#c0)"><rect x="330" y="270" width="2" height="180" fill="#3cc83c"/><rect x="332" y="270" width="2" height="180" fill="#00ff00"/><rect x="334" y="270" width="1" height="180" fill="#00ff00"/><rect x="335" y="270" width="1" height="180" fill="#00ff00"/><rect x="336" y="270" width="1" height="180" fill="#3cc83c"/><rect x="337" y="270" width="1" height="180" fill="#00ff00"/><rect x="338" y="270" width="2" height="180" fill="#00ff00"/><rect x="340" y="270" width="1" height="180" fill="#00ff00"/><rect x="341" y="270" width="2" height="180" fill="#00ff00"/><rect x="343" y="270" width="3" height="180" fill="#00ff00"/><rect x="346" y="270" width="1" height="180" fill="#00ff00"/><rect x="347" y="270" width="3" height="180" fill="#3cc83c"/><rect x="350" y="270" width="3" height="180" fill="#00ff00"/><rect x="353" y="270" width="1" height="180" fill="#3cc83c"/><rect x="354" y="270" width="1" height="180" fill="#00ff00"/><rect x="355" y="270" width="1" height="180" fill="#00ff00"/><rect x="356" y="270" width="1" height="180" fill="#00ff00"/><rect x="357" y="270" width="3" height="180" fill="#00ff00"/><rect x="360" y="270" width="4" height="180" fill="#00ff00"/><rect x="364" y="270" width="3" height="180" fill="#00ff00"/><rect x="367" y="270" width="1" height="180" fill="#00ff00"/><rect x="368" y="270" width="3" height="180" fill="#00ff00"/><rect x="371" y="270" width="3" height="180" fill="#00ff00"/><rect x="374" y="270" width="1" height="180" fill="#00ff00"/><rect x="375" y="270" width="3" height="180" fill="#00ff00"/><rect x="378" y="270" width="2" height="180" fill="#00ff00"/><rect x="380" y="270" width="2" height="180" fill="#00ff00"/><rect x="382" y="270" width="1" height="180" fill="#00ff00"/><rect x="383" y="270" width="4" height="180" fill="#00ff00"/><rect x="387" y="270" width="1" height="180" fill="#00ff00"/><rect x="388" y="270" width="3" height="180" fill="#00ff00"/><rect x="391" y="270" width="2" height="180" fill="#00ff00"/><rect x="393" y="270" width="2" height="180" fill="#00ff00"/><rect x="395" y="270" width="1" height="180" fill="#00ff00"/><rect x="396" y="270" width="2" height="180" fill="#00ff00"/><rect x="398" y="270" width="2" height="180" fill="#00ff00"/><rect x="400" y="270" width="2" height="180" fill="#00ff00"/><rect x="402" y="270" width="4" height="180" fill="#00ff00"/><rect x="406" y="270" width="3" height="180" fill="#00ff00"/><rect x="409" y="270" width="2" height="180" fill="#0000ff"/><rect x="411" y="270" width="2" height="180" fill="#0000ff"/><rect x="413" y="270" width="3" height="180" fill="#0000ff"/><rect x="416" y="270" width="1" height="180" fill="#0000ff"/><rect x="417" y="270" width="2" height="180" fill="#0000ff"/><rect x="419" y="270" width="4" height="180" fill="#0000ff"/><rect x="423" y="270" width="4" height="180" fill="#0000ff"/><rect x="427" y="270" width="4" height="180" fill="#0000ff"/><rect x="431" y="270" width="4" height="180" fill="#0000ff"/><rect x="435" y="270" width="2" height="180" fill="#0000ff"/><rect x="437" y="270" width="4" height="180" fill="#0000ff"/><rect x="441" y="270" width="2" height="180" fill="#0000ff"/><rect x="443" y="270" width="3" height="180" fill="#87cef0"/><rect x="446" y="270" width="1" height="180" fill="#87cef0"/><rect x="447" y="270" width="2" height="180" fill="#87cef0"/><rect x="449" y="270" width="1" height="180" fill="#87cef0"/><rect x="450" y="270" width="2" height="180" fill="#87cef0"/><rect x="452" y="270" width="2" height="180" fill="#87cef0"/><rect x="454" y="270" width="2" height="180" fill="#00ffff"/><rect x="456" y="270" width="2" height="180" fill="#00ffff"/></g>
<g clip-path="url(#c1)"><rect x="330" y="270" width="2" height="180" fill="#00ff00"/><rect x="332" y="270" width="2" height="180" fill="#00ff00"/><rect x="334" y="270" width="2" height="180" fill="#3cc83c"/><rect x="336" y="270" width="1" height="180" fill="#00ff00"/><rect x="337" y="270" width="1" height="180" fill="#00ff00"/><rect x="338" y="270" width="1" height="180" fill="#00ff00"/><rect x="339" y="270" width="3" height="180" fill="#00ff00"/><rect x="342" y="270" width="2" height="180" fill="#00ff00"/><rect x="344" y="270" width="2" height="180" fill="#00ff00"/><rect x="346" y="270" width="3" height="180" fill="#00ff00"/><rect x="349" y="270" width="1" height="180" fill="#00ff00"/><rect x="350" y="270" width="3" height="180" fill="#3cc83c"/><rect x="353" y="270" width="4" height="180" fill="#00ff00"/><rect x="357" y="270" width="1" height="180" fill="#00ff00"/><rect x="358" y="270" width="4" height="180" fill="#00ff00"/><rect x="362" y="270" width="2" height="180" fill="#00ff00"/><rect x="364" y="270" width="2" height="180" fill="#00ff00"/><rect x="366" y="270" width="4" height="180" fill="#00ff00"/><rect x="370" y="270" width="1" height="180" fill="#00ff00"/><rect x="371" y="270" width="1" height="180" fill="#00ff00"/><rect x="372" y="270" width="1" height="180" fill="#00ff00"/><rect x="373" y="270" width="1" height="180" fill="#00ff00"/><rect x="374" y="270" width="3" height="180" fill="#00ff00"/><rect x="377" y="270" width="1" height="180" fill="#3cc83c"/><rect x="378" y="270" width="3" height="180" fill="#00ff00"/><rect x="381" y="270" width="1" height="180" fill="#00ff00"/><rect x="382" y="270" width="1" height="180" fill="#00ff00"/><rect x="383" y="270" width="2" height="180" fill="#00ff00"/><rect x="385" y="270" width="2" height="180" fill="#00ff00"/><rect x="387" y="270" width="2" height="180" fill="#3cc83c"/><rect x="389" y="270" width="2" height="180" fill="#00ff00"/><rect x="391" y="270" width="2" height="180" fill="#00ff00"/><rect x="393" y="270" width="1" height="180" fill="#00ff00"/><rect x="394" y="270" width="4" height="180" fill="#00ff00"/><rect x="398" y="270" width="4" height="180" fill="#00ff00"/><rect x="402" y="270" width="1" height="180" fill="#00ff00"/><rect x="403" y="270" width="3" height="180" fill="#00ff00"/><rect x="406" y="270" width="4" height="180" fill="#00ff00"/><rect x="410" y="270" width="1" height="180" fill="#00ff00"/><rect x="411" y="270" width="2" height="180" fill="#3cc83c"/><rect x="413" y="270" width="1" height="180" fill="#00ff00"/><rect x="414" y="270" width="2" height="180" fill="#00ff00"/><rect x="416" y="270" width="1" height="180" fill="#00ff00"/><rect x="417" y="270" width="1" height="180" fill="#00ff00"/><rect x="418" y="270" width="3" height="180" fill="#00ff00"/><rect x="421" y="270" width="1" height="180" fill="#00ff00"/><rect x="422" y="270" width="1" height="180" fill="#00ff00"/><rect x="423" y="270" width="2" height="180" fill="#00ff00"/><rect x="425" y="270" width="1" height="180" fill="#00ff00"/><rect x="426" y="270" width="2" height="180" fill="#00ff00"/><rect x="428" y="270" width="1" height="180" fill="#3cc83c"/><rect x="429" y="270" width="2" height="180" fill="#00ff00"/><rect x="431" y="270" width="1" height="180" fill="#00ff00"/><rect x="432" y="270" width="2" height="180" fill="#00ff00"/><rect x="434" y="270" width="4" height="180" fill="#3cc83c"/><rect x="438" y="270" width="2" height="180" fill="#00ff00"/><rect x="440" y="270" width="1" height="180" fill="#00ff00"/><rect x="441" y="270" width="1" height="180" fill="#00ff00"/><rect x="442" y="270" width="2" height="180" fill="#00ff00"/><rect x="444" y="270" width="3" height="180" fill="#00ff00"/><rect x="447" y="270" width="2" height="180" fill="#3cc83c"/><rect x="449" y="270" width="2" height="180" fill="#00ff00"/><rect x="451" y="270" width="1" height="180" fill="#00ff00"/><rect x="452" y="270" width="1" height="180" fill="#3cc83c"/><rect x="453" y="270" width="4" height="180" fill="#00ff00"/><rect x="457" y="270" width="2" height="180" fill="#87cef0"/><rect x="459" y="270" width="2" height="180" fill="#87cef0"/><rect x="461" y="270" width="2" height="180" fill="#0000ff"/><rect x="463" y="270" width="4" height="180" fill="#0000ff"/><rect x="467" y="270" width="2" height="180" fill="#87cef0"/><rect x="469" y="270" width="1" height="180" fill="#87cef0"/><rect x="470" y="270" width="1" height="180" fill="#00ffff"/><rect x="471" y="270" width="1" height="180" fill="#87cef0"/><rect x="472" y="270" width="2" height="180" fill="#87cef0"/><rect x="474" y="270" width="1" height="180" fill="#87cef0"/><rect x="475" y="270" width="3" height="180" fill="#00ffff"/><rect x="478" y="270" width="4" height="180" fill="#00ffff"/></g>
<g clip-path="url(#c2)"><rect x="330" y="270" width="1" height="180" fill="#00ff00"/><rect x="331" y="270" width="1" height="180" fill="#00ff00"/><rect x="332" y="270" width="4" height="180" fill="#00ff00"/><rect x="336" y="270" width="3" height="180" fill="#00ff00"/><rect x="339" y="270" width="1" height="180" fill="#00ff00"/><rect x="340" y="270" width="1" height="180" fill="#3cc83c"/><rect x="341" y="270" width="1" height="180" fill="#00ff00"/><rect x="342" y="270" width="1" height="180" fill="#00ff00"/><rect x="343" y="270" width="1" height="180" fill="#00ff00"/><rect x="344" y="270" width="2" height="180" fill="#00ff00"/><rect x="346" y="270" width="2" height="180" fill="#3cc83c"/><rect x="348" y="270" width="1" height="180" fill="#0000ff"/><rect x="349" y="270" width="2" height="180" fill="#3cc83c"/><rect x="351" y="270" width="4" height="180" fill="#00ff00"/><rect x="355" y="270" width="3" height="180" fill="#00ff00"/><rect x="358" y="270" width="3" height="180" fill="#00ff00"/><rect x="361" y="270" width="1" height="180" fill="#00ff00"/><rect x="362" y="270" width="1" height="180" fill="#3cc83c"/><rect x="363" y="270" width="1" height="180" fill="#00ff00"/><rect x="364" y="270" width="1" height="180" fill="#00ff00"/><rect x="365" y="270" width="2" height="180" fill="#00ff00"/><rect x="367" y="270" width="1" height="180" fill="#00ff00"/><rect x="368" y="270" width="2" height="180" fill="#00ff00"/><rect x="370" y="270" width="3" height="180" fill="#00ff00"/><rect x="373" y="270" width="1" height="180" fill="#3cc83c"/><rect x="374" y="270" width="1" height="180" fill="#00ff00"/><rect x="375" y="270" width="2" height="180" fill="#00ff00"/><rect x="377" y="270" width="1" height="180" fill="#00ff00"/><rect x="378" y="270" width="3" height="180" fill="#00ff00"/><rect x="381" y="270" width="1" height="180" fill="#00ff00"/><rect x="382" y="270" width="3" height="180" fill="#0000ff"/><rect x="385" y="270" width="3" height="180" fill="#00ff00"/><rect x="388" y="270" width="4" height="180" fill="#00ff00"/><rect x="392" y="270" width="3" height="180" fill="#00ff00"/><rect x="395" y="270" width="2" height="180" fill="#00ff00"/><rect x="397" y="270" width="1" height="180" fill="#00ff00"/><rect x="398" y="270" width="2" height="180" fill="#0000ff"/><rect x="400" y="270" width="1" height="180" fill="#3cc83c"/><rect x="401" y="270" width="1" height="180" fill="#00ff00"/><rect x="402" y="270" width="2" height="180" fill="#00ff00"/><rect x="404" y="270" width="1" height="180" fill="#00ff00"/><rect x="405" y="270" width="2" height="180" fill="#00ff00"/><rect x="407" y="270" width="4" height="180" fill="#00ff00"/><rect x="411" y="270" width="1" height="180" fill="#3cc83c"/><rect x="412" y="270" width="1" height="180" fill="#0000ff"/><rect x="413" y="270" width="4" height="180" fill="#00ff00"/><rect x="417" y="270" width="1" height="180" fill="#00ff00"/><rect x="418" y="270" width="1" height="180" fill="#0000ff"/><rect x="419" y="270" width="1" height="180" fill="#00ff00"/><rect x="420" y="270" width="1" height="180" fill="#00ff00"/><rect x="421" y="270" width="2" height="180" fill="#00ff00"/><rect x="423" y="270" width="4" height="180" fill="#3cc83c"/><rect x="427" y="270" width="1" height="180" fill="#00ff00"/><rect x="428" y="270" width="3" height="180" fill="#00ff00"/><rect x="431" y="270" width="2" height="180" fill="#00ff00"/><rect x="433" y="270" width="2" height="180" fill="#00ff00"/><rect x="435" y="270" width="2" height="180" fill="#00ff00"/><rect x="437" y="270" width="3" height="180" fill="#00ff00"/><rect x="440" y="270" width="4" height="180" fill="#00ff00"/><rect x="444" y="270" width="2" height="180" fill="#00ff00"/><rect x="446" y="270" width="2" height="180" fill="#00ff00"/><rect x="448" y="270" width="1" height="180" fill="#00ff00"/><rect x="449" y="270" width="1" height="180" fill="#0000ff"/><rect x="450" y="270" width="1" height="180" fill="#00ff00"/><rect x="451" y="270" width="2" height="180" fill="#00ff00"/><rect x="453" y="270" width="1" height="180" fill="#00ff00"/><rect x="454" y="270" width="1" height="180" fill="#3cc83c"/><rect x="455" y="270" width="4" height="180" fill="#3cc83c"/><rect x="459" y="270" width="2" height="180" fill="#00ff00"/><rect x="461" y="270" width="3" height="180" fill="#0000ff"/><rect x="464" y="270" width="3" height="180" fill="#00ff00"/><rect x="467" y="270" width="2" height="180" fill="#00ff00"/><rect x="469" y="270" width="1" height="180" fill="#00ff00"/><rect x="470" y="270" width="1" height="180" fill="#00ff00"/><rect x="471" y="270" width="1" height="180" fill="#00ff00"/><rect x="472" y="270" width="1" height="180" fill="#00ff00"/><rect x="473" y="270" width="2" height="180" fill="#00ff00"/><rect x="475" y="270" width="1" height="180" fill="#00ff00"/><rect x="476" y="270" width="1" height="180" fill="#00ff00"/><rect x="477" y="270" width="2" height="180" fill="#0000ff"/><rect x="479" y="270" width="2" height="180" fill="#0000ff"/><rect x="481" y="270" width="2" height="180" fill="#00ff00"/><rect x="483" y="270" width="1" height="180" fill="#00ff00"/><rect x="484" y="270" width="1" height="180" fill="#0000ff"/><rect x="485" y="270" width="1" height="180" fill="#00ff00"/><rect x="486" y="270" width="1" height="180" fill="#00ff00"/><rect x="487" y="270" width="2" height="180" fill="#00ff00"/><rect x="489" y="270" width="3" height="180" fill="#87cef0"/><rect x="492" y="270" width="2" height="180" fill="#0000ff"/><rect x="494" y="270" width="4" height="180" fill="#0000ff"/><rect x="498" y="270" width="2" height="180" fill="#87cef0"/><rect x="500" y="270" width="2" height="180" fill="#87cef0"/><rect x="502" y="270" width="1" height="180" fill="#0000ff"/><rect x="503" y="270" width="3" height="180" fill="#00ffff"/><rect x="506" y="270" width="3" height="180" fill="#00ffff"/><rect x="509" y="270" width="2" height="180" fill="#00ffff"/><rect x="511" y="270" width="4" height="180" fill="#00ffff"/><rect x="515" y="270" width="2" height="180" fill="#00ffff"/><rect x="517" y="270" width="2" height="180" fill="#87cef0"/></g>
<g clip-path="url(#c8)"><rect x="330" y="270" width="2" height="180" fill="#f0f000"/><rect x="332" y="270" width="1" height="180" fill="#00ff00"/><rect x="333" y="270" width="4" height="180" fill="#2c8c2c"/><rect x="337" y="270" width="1" height="180" fill="#00ff00"/><rect x="338" y="270" width="2" height="180" fill="#2c8c2c"/><rect x="340" y="270" width="1" height="180" fill="#00ff00"/><rect x="341" y="270" width="4" height="180" fill="#2c8c2c"/><rect x="345" y="270" width="2" height="180" fill="#f0f000"/><rect x="347" y="270" width="1" height="180" fill="#00ff00"/><rect x="348" y="270" width="2" height="180" fill="#2c8c2c"/><rect x="350" y="270" width="4" height="180" fill="#2c8c2c"/><rect x="354" y="270" width="3" height="180" fill="#00ff00"/><rect x="357" y="270" width="2" height="180" fill="#00ff00"/><rect x="359" y="270" width="1" height="180" fill="#00ff00"/><rect x="360" y="270" width="2" height="180" fill="#00ff00"/><rect x="362" y="270" width="2" height="180" fill="#2c8c2c"/><rect x="364" y="270" width="3" height="180" fill="#00ff00"/><rect x="367" y="270" width="1" height="180" fill="#2c8c2c"/><rect x="368" y="270" width="2" height="180" fill="#00ff00"/><rect x="370" y="270" width="1" height="180" fill="#00ff00"/><rect x="371" y="270" width="2" height="180" fill="#00ff00"/><rect x="373" y="270" width="2" height="180" fill="#3cc83c"/><rect x="375" y="270" width="1" height="180" fill="#00ff00"/><rect x="376" y="270" width="1" height="180" fill="#00ff00"/><rect x="377" y="270" width="1" height="180" fill="#00ff00"/><rect x="378" y="270" width="3" height="180" fill="#00ff00"/><rect x="381" y="270" width="1" height="180" fill="#00ff00"/><rect x="382" y="270" width="4" height="180" fill="#00ff00"/><rect x="386" y="270" width="3" height="180" fill="#2c8c2c"/><rect x="389" y="270" width="1" height="180" fill="#3cc83c"/><rect x="390" y="270" width="4" height="180" fill="#3cc83c"/><rect x="394" y="270" width="3" height="180" fill="#00ff00"/><rect x="397" y="270" width="2" height="180" fill="#3cc83c"/><rect x="399" y="270" width="2" height="180" fill="#00ff00"/><rect x="401" y="270" width="4" height="180" fill="#3cc83c"/><rect x="405" y="270" width="1" height="180" fill="#00ff00"/><rect x="406" y="270" width="4" height="180" fill="#2c8c2c"/><rect x="410" y="270" width="4" height="180" fill="#00ff00"/><rect x="414" y="270" width="4" height="180" fill="#3cc83c"/><rect x="418" y="270" width="1" height="180" fill="#0000ff"/><rect x="419" y="270" width="3" height="180" fill="#00ff00"/><rect x="422" y="270" width="1" height="180" fill="#3cc83c"/><rect x="423" y="270" width="3" height="180" fill="#3cc83c"/><rect x="426" y="270" width="4" height="180" fill="#00ff00"/><rect x="430" y="270" width="4" height="180" fill="#00ff00"/><rect x="434" y="270" width="1" height="180" fill="#00ff00"/><rect x="435" y="270" width="1" height="180" fill="#00ff00"/><rect x="436" y="270" width="1" height="180" fill="#00ff00"/><rect x="437" y="270" width="2" height="180" fill="#00ff00"/><rect x="439" y="270" width="4" height="180" fill="#00ff00"/><rect x="443" y="270" width="3" height="180" fill="#00ff00"/><rect x="446" y="270" width="2" height="180" fill="#00ff00"/><rect x="448" y="270" width="2" height="180" fill="#3cc83c"/><rect x="450" y="270" width="4" height="180" fill="#0000ff"/><rect x="454" y="270" width="3" height="180" fill="#00ff00"/><rect x="457" y="270" width="3" height="180" fill="#00ff00"/><rect x="460" y="270" width="4" height="180" fill="#00ff00"/><rect x="464" y="270" width="1" height="180" fill="#3cc83c"/><rect x="465" y="270" width="1" height="180" fill="#3cc83c"/><rect x="466" y="270" width="1" height="180" fill="#00ff00"/><rect x="467" y="270" width="4" height="180" fill="#0000ff"/><rect x="471" y="270" width="2" height="180" fill="#3cc83c"/><rect x="473" y="270" width="1" height="180" fill="#00ff00"/><rect x="474" y="270" width="4" height="180" fill="#00ff00"/><rect x="478" y="270" width="1" height="180" fill="#00ff00"/><rect x="479" y="270" width="4" height="180" fill="#00ff00"/><rect x="483" y="270" width="3" height="180" fill="#00ff00"/><rect x="486" y="270" width="2" height="180" fill="#00ff00"/><rect x="488" y="270" width="4" height="180" fill="#00ff00"/><rect x="492" y="270" width="3" height="180" fill="#00ff00"/><rect x="495" y="270" width="2" height="180" fill="#00ff00"/><rect x="497" y="270" width="2" height="180" fill="#0000ff"/><rect x="499" y="270" width="1" height="180" fill="#00ff00"/><rect x="500" y="270" width="4" height="180" fill="#00ff00"/><rect x="504" y="270" width="4" height="180" fill="#0000ff"/><rect x="508" y="270" width="2" height="180" fill="#0000ff"/><rect x="510" y="270" width="1" height="180" fill="#87cef0"/><rect x="511" y="270" width="3" height="180" fill="#0000ff"/><rect x="514" y="270" width="1" height="180" fill="#0000ff"/><rect x="515" y="270" width="1" height="180" fill="#0000ff"/><rect x="516" y="270" width="1" height="180" fill="#0000ff"/><rect x="517" y="270" width="2" height="180" fill="#0000ff"/><rect x="519" y="270" width="2" height="180" fill="#0000ff"/><rect x="521" y="270" width="1" height="180" fill="#0000ff"/><rect x="522" y="270" width="1" height="180" fill="#0000ff"/><rect x="523" y="270" width="3" height="180" fill="#0000ff"/><rect x="526" y="270" width="2" height="180" fill="#0000ff"/><rect x="528" y="270" width="4" height="180" fill="#0000ff"/><rect x="532" y="270" width="1" height="180" fill="#0000ff"/><rect x="533" y="270" width="1" height="180" fill="#0000ff"/><rect x="534" y="270" width="2" height="180" fill="#0000ff"/><rect x="536" y="270" width="1" height="180" fill="#0000ff"/><rect x="537" y="270" width="2" height="180" fill="#87cef0"/><rect x="539" y="270" width="2" height="180" fill="#87cef0"/><rect x="541" y="270" width="1" height="180" fill="#87cef0"/><rect x="542" y="270" width="2" height="180" fill="#87cef0"/><rect x="544" y="270" width="2" height="180" fill="#87cef0"/><rect x="546" y="270" width="2" height="180" fill="#00ffff"/><rect x="548" y="270" width="1" height="180" fill="#00ffff"/><rect x="549" y="270" width="1" height="180" fill="#00ffff"/><rect x="550" y="270" width="4" height="180" fill="#00ffff"/><rect x="554" y="270" width="2" height="180" fill="#00ffff"/><rect x="556" y="270" width="2" height="180" fill="#00ffff"/></g>
<g clip-path="url(#cy)"><rect x="330" y="270" width="3" height="180" fill="#f0f000"/><rect x="333" y="270" width="2" height="180" fill="#00ff00"/><rect x="335" y="270" width="1" height="180" fill="#f0f000"/><rect x="336" y="270" width="1" height="180" fill="#3cc83c"/><rect x="337" y="270" width="2" height="180" fill="#00ff00"/><rect x="339" y="270" width="1" height="180" fill="#f0f000"/><rect x="340" y="270" width="2" height="180" fill="#2c8c2c"/><rect x="342" y="270" width="2" height="180" fill="#f0f000"/><rect x="344" y="270" width="2" height="180" fill="#00ff00"/><rect x="346" y="270" width="2" height="180" fill="#3cc83c"/><rect x="348" y="270" width="4" height="180" fill="#2c8c2c"/><rect x="352" y="270" width="3" height="180" fill="#2c8c2c"/><rect x="355" y="270" width="4" height="180" fill="#f0f000"/><rect x="359" y="270" width="4" height="180" fill="#f0f000"/><rect x="363" y="270" width="3" height="180" fill="#2c8c2c"/><rect x="366" y="270" width="4" height="180" fill="#f0dc8c"/><rect x="370" y="270" width="2" height="180" fill="#f0f000"/><rect x="372" y="270" width="3" height="180" fill="#f0f000"/><rect x="375" y="270" width="2" height="180" fill="#f0f000"/><rect x="377" y="270" width="2" height="180" fill="#f0f000"/><rect x="379" y="270" width="4" height="180" fill="#2c8c2c"/><rect x="383" y="270" width="4" height="180" fill="#f0f000"/><rect x="387" y="270" width="4" height="180" fill="#f0f000"/><rect x="391" y="270" width="2" height="180" fill="#2c8c2c"/><rect x="393" y="270" width="2" height="180" fill="#f0f000"/><rect x="395" y="270" width="4" height="180" fill="#f0f000"/><rect x="399" y="270" width="1" height="180" fill="#2c8c2c"/><rect x="400" y="270" width="2" height="180" fill="#2c8c2c"/><rect x="402" y="270" width="2" height="180" fill="#f0dc8c"/><rect x="404" y="270" width="2" height="180" fill="#f0f000"/><rect x="406" y="270" width="3" height="180" fill="#f0f000"/><rect x="409" y="270" width="1" height="180" fill="#f0f000"/><rect x="410" y="270" width="3" height="180" fill="#f0f000"/><rect x="413" y="270" width="1" height="180" fill="#f0f000"/><rect x="414" y="270" width="3" height="180" fill="#f0f000"/><rect x="417" y="270" width="1" height="180" fill="#f0f000"/><rect x="418" y="270" width="2" height="180" fill="#3cc83c"/><rect x="420" y="270" width="4" height="180" fill="#2c8c2c"/><rect x="424" y="270" width="2" height="180" fill="#3cc83c"/><rect x="426" y="270" width="1" height="180" fill="#2c8c2c"/><rect x="427" y="270" width="3" height="180" fill="#00ff00"/><rect x="430" y="270" width="1" height="180" fill="#2c8c2c"/><rect x="431" y="270" width="3" height="180" fill="#2c8c2c"/><rect x="434" y="270" width="1" height="180" fill="#3cc83c"/><rect x="435" y="270" width="1" height="180" fill="#3cc83c"/><rect x="436" y="270" width="4" height="180" fill="#3cc83c"/><rect x="440" y="270" width="2" height="180" fill="#00ff00"/><rect x="442" y="270" width="1" height="180" fill="#3cc83c"/><rect x="443" y="270" width="2" height="180" fill="#2c8c2c"/><rect x="445" y="270" width="2" height="180" fill="#00ff00"/><rect x="447" y="270" width="2" height="180" fill="#3cc83c"/><rect x="449" y="270" width="2" height="180" fill="#00ff00"/><rect x="451" y="270" width="3" height="180" fill="#00ff00"/><rect x="454" y="270" width="2" height="180" fill="#3cc83c"/><rect x="456" y="270" width="1" height="180" fill="#3cc83c"/><rect x="457" y="270" width="1" height="180" fill="#2c8c2c"/><rect x="458" y="270" width="4" height="180" fill="#3cc83c"/></g>
<g clip-path="url(#c9)"><rect x="330" y="360" width="2" height="90" fill="#00ff00"/><rect x="332" y="360" width="1" height="90" fill="#00ff00"/><rect x="333" y="360" width="1" height="90" fill="#f0f000"/><rect x="334" y="360" width="1" height="90" fill="#2c8c2c"/><rect x="335" y="360" width="1" height="90" fill="#2c8c2c"/><rect x="336" y="360" width="2" height="90" fill="#00ff00"/><rect x="338" y="360" width="1" height="90" fill="#00ff00"/><rect x="339" y="360" width="2" height="90" fill="#f0f000"/><rect x="341" y="360" width="2" height="90" fill="#2c8c2c"/><rect x="343" y="360" width="1" height="90" fill="#00ff00"/><rect x="344" y="360" width="1" height="90" fill="#2c8c2c"/><rect x="345" y="360" width="2" height="90" fill="#2c8c2c"/><rect x="347" y="360" width="2" height="90" fill="#f0f000"/><rect x="349" y="360" width="2" height="90" fill="#f0f000"/><rect x="351" y="360" width="1" height="90" fill="#00ff00"/><rect x="352" y="360" width="4" height="90" fill="#3cc83c"/><rect x="356" y="360" width="3" height="90" fill="#f0f000"/><rect x="359" y="360" width="2" height="90" fill="#2c8c2c"/><rect x="361" y="360" width="4" height="90" fill="#f0f000"/><rect x="365" y="360" width="2" height="90" fill="#3cc83c"/><rect x="367" y="360" width="3" height="90" fill="#2c8c2c"/><rect x="370" y="360" width="1" height="90" fill="#3cc83c"/><rect x="371" y="360" width="4" height="90" fill="#2c8c2c"/><rect x="375" y="360" width="4" height="90" fill="#2c8c2c"/><rect x="379" y="360" width="3" height="90" fill="#3cc83c"/><rect x="382" y="360" width="1" height="90" fill="#2c8c2c"/><rect x="383" y="360" width="2" height="90" fill="#2c8c2c"/><rect x="385" y="360" width="2" height="90" fill="#2c8c2c"/><rect x="387" y="360" width="2" height="90" fill="#2c8c2c"/><rect x="389" y="360" width="3" height="90" fill="#f0f000"/><rect x="392" y="360" width="4" height="90" fill="#3cc83c"/><rect x="396" y="360" width="2" height="90" fill="#2c8c2c"/><rect x="398" y="360" width="1" height="90" fill="#f0dc8c"/><rect x="399" y="360" width="2" height="90" fill="#f0dc8c"/><rect x="401" y="360" width="1" height="90" fill="#2c8c2c"/><rect x="402" y="360" width="2" height="90" fill="#2c8c2c"/><rect x="404" y="360" width="1" height="90" fill="#2c8c2c"/><rect x="405" y="360" width="4" height="90" fill="#3cc83c"/><rect x="409" y="360" width="3" height="90" fill="#3cc83c"/><rect x="410" y="360" width="3" height="90" fill="#f0f000"/><rect x="413" y="360" width="4" height="90" fill="#3cc83c"/><rect x="417" y="360" width="2" height="90" fill="#2c8c2c"/><rect x="419" y="360" width="6" height="90" fill="#3cc83c"/><rect x="425" y="360" width="2" height="90" fill="#3cc83c"/><rect x="427" y="360" width="1" height="90" fill="#0000ff"/><rect x="428" y="360" width="1" height="90" fill="#3cc83c"/><rect x="429" y="360" width="1" height="90" fill="#0000ff"/><rect x="430" y="360" width="7" height="90" fill="#3cc83c"/><rect x="437" y="360" width="3" height="90" fill="#87cef0"/><rect x="440" y="360" width="1" height="90" fill="#0000ff"/><rect x="441" y="360" width="1" height="90" fill="#87cef0"/><rect x="442" y="360" width="1" height="90" fill="#0000ff"/><rect x="443" y="360" width="2" height="90" fill="#87cef0"/><rect x="445" y="360" width="7" height="90" fill="#3cc83c"/><rect x="452" y="360" width="2" height="90" fill="#0000ff"/><rect x="454" y="360" width="1" height="90" fill="#3cc83c"/><rect x="455" y="360" width="1" height="90" fill="#f08020"/><rect x="456" y="360" width="1" height="90" fill="#f03020"/><rect x="457" y="360" width="1" height="90" fill="#3cc83c"/><rect x="458" y="360" width="2" height="90" fill="#87cef0"/><rect x="460" y="360" width="1" height="90" fill="#00ffff"/><rect x="461" y="360" width="1" height="90" fill="#3cc83c"/><rect x="462" y="360" width="2" height="90" fill="#0000ff"/><rect x="464" y="360" width="1" height="90" fill="#000000"/><rect x="465" y="360" width="1" height="90" fill="#87cef0"/><rect x="466" y="360" width="2" height="90" fill="#0000ff"/><rect x="468" y="360" width="2" height="90" fill="#87cef0"/><rect x="470" y="360" width="6" height="90" fill="#3cc83c"/><rect x="476" y="360" width="1" height="90" fill="#00ffff"/><rect x="477" y="360" width="1" height="90" fill="#87cef0"/><rect x="478" y="360" width="2" height="90" fill="#0000ff"/><rect x="480" y="360" width="2" height="90" fill="#87cef0"/><rect x="482" y="360" width="1" height="90" fill="#000000"/><rect x="483" y="360" width="1" height="90" fill="#0000ff"/><rect x="484" y="360" width="2" height="90" fill="#00ffff"/><rect x="486" y="360" width="3" height="90" fill="#87cef0"/><rect x="489" y="360" width="2" height="90" fill="#3cc83c"/><rect x="491" y="360" width="2" height="90" fill="#f08020"/><rect x="493" y="360" width="1" height="90" fill="#f03020"/><rect x="494" y="360" width="4" height="90" fill="#90e090"/></g></g>
<g fill="none" stroke="#ffffff" stroke-width="1" shape-rendering="crispEdges">
<line x1="30" y1="189.7" x2="302.3" y2="105.7"/>
<line x1="30" y1="371" x2="487" y2="231"/>
<line x1="469.3" y1="106" x2="487" y2="231"/>
<line x1="494" y1="106" x2="598.5" y2="264"/>
<line x1="487" y1="231" x2="598" y2="400"/>
<line x1="28" y1="318" x2="141" y2="485"/>
<line x1="141" y1="485" x2="161" y2="614"/>
<line x1="141" y1="485" x2="597" y2="348"/>
<line x1="28" y1="452" x2="134" y2="614"/>
<line x1="325" y1="613" x2="597" y2="529"/>
</g>

<text id="t_map" x="138.5" y="600" font-family="Liberation Mono" font-size="13.2" fill="#00ff00">KDVN Reflectivity - RHI 1998-06-29 21:35:57Z</text>
</svg>

<div id="legend" class="a"></div>
<div class="a lt" id="t_leg" style="left:692px;top:73px;font-size:15px;letter-spacing:0.6px">Legend</div>
<div class="a hl" style="left:615px;top:93px;width:228px"></div>
<div class="a col" style="left:617px;top:98px"></div>
<div class="a cb" style="left:630px;top:96px"></div>
<div class="a lt" id="t_maps" style="left:651px;top:94px;font-size:13px;letter-spacing:-0.2px">Maps</div>
<div class="a hl" style="left:615px;top:110px;width:228px"></div>
<div class="a col" style="left:620px;top:117px"></div>
<div class="a cb" style="left:633px;top:114px"></div>
<div class="a lt" id="t_dbm" style="left:654px;top:114px;font-size:11px;letter-spacing:-0.2px;color:#0a3cf0;text-decoration:underline;text-underline-offset:2px">Default Background Maps</div>
<div class="a lt" id="t_wc" style="left:622px;top:130px;font-size:11px;letter-spacing:-0.3px">World Coastlines</div>
<div class="a lt" id="t_us" style="left:622px;top:143px;font-size:11px;letter-spacing:-0.35px">U.S. County Outlines</div>
<div class="a hl" style="left:615px;top:160px;width:228px"></div>
<div class="a col" style="left:617px;top:165px"></div>
<div class="a cb" style="left:630px;top:164px"></div>
<div class="a lt" id="t_rd" style="left:651px;top:163px;font-size:13px;letter-spacing:-0.15px">Radar Displays</div>
<div class="a hl" style="left:615px;top:178px;width:228px"></div>
<div class="a col" style="left:620px;top:184px"></div>
<div class="a cb" style="left:633px;top:183px"></div>
<div class="a lt" id="t_kd" style="left:654px;top:183px;font-size:11px;letter-spacing:-0.13px;color:#0a3cf0;text-decoration:underline;text-underline-offset:2px">KDVN Reflectivity - RHI</div>
<div class="a lt" id="t_az" style="left:621px;top:197px;font-size:11px">Azimuth: 21.3</div>
<div class="a" style="left:621px;top:212px;width:174px;height:15px;background:linear-gradient(90deg,#000 0%,#000 2.3%,#0a6060 4%,#00ffff 6.5%,#00ffff 10.5%,#90d8f0 12%,#90d8f0 14.5%,#6080f0 16.5%,#0000ff 19.5%,#0000ff 22%,#102060 23.8%,#00ff00 26%,#00ff00 33%,#30a030 36%,#208820 41%,#a0c010 44%,#f0f000 47%,#f0f000 51.5%,#f0d890 54.5%,#f0a050 57%,#f08030 60%,#f03030 64%,#f03030 68%,#a83060 72%,#a83060 79%,#b050c0 83%,#c060d0 86%,#ff00ff 89%,#ff00ff 95.5%,#ffd0ff 99%,#fff 100%)"></div>
<div class="a lt" id="t_0" style="left:622px;top:227px;font-size:11px">0</div>
<div class="a lt" id="t_80" style="left:783px;top:227px;font-size:11px;letter-spacing:1px">80</div>

<div id="status" class="a"></div>
<div class="a sb" style="left:6px;width:177px"></div>
<div class="a sb" style="left:184px;width:530px"></div>
<div class="a sb" style="left:715px;width:128px"></div>
<div class="a st" id="t_mem" style="left:13px;letter-spacing:1px">Memory: 239/348/954 MB</div>
<div class="a st" id="t_lat" style="left:187px;letter-spacing:0.25px">Latitude:</div><div class="a st" id="t_lat2" style="left:249px;letter-spacing:0.6px">43.6</div><div class="a st" id="t_lon" style="left:288px;letter-spacing:0.4px">Longitude:</div><div class="a st" id="t_lon2" style="left:359px;letter-spacing:1px">-92.5</div><div class="a st" id="t_alt" style="left:405px;letter-spacing:0.45px">Altitude:</div><div class="a st" id="t_alt2" style="left:462px;letter-spacing:0.95px">15517.4 m</div>
<svg class="a" style="left:0;top:0" width="849" height="643" viewBox="0 0 849 643"><defs><radialGradient id="glb" cx="0.4" cy="0.35" r="0.7"><stop offset="0" stop-color="#4a6ab8"/><stop offset="0.6" stop-color="#1c2a78"/><stop offset="1" stop-color="#0a1440"/></radialGradient><radialGradient id="grn" cx="0.4" cy="0.35" r="0.7"><stop offset="0" stop-color="#8ad0b0"/><stop offset="0.5" stop-color="#2a8a50"/><stop offset="1" stop-color="#0a3a20"/></radialGradient><linearGradient id="cbg" x1="0" y1="0" x2="0" y2="1"><stop offset="0" stop-color="#fcfdfe"/><stop offset="1" stop-color="#c4d4e6"/></linearGradient></defs>
<circle cx="19" cy="10.5" r="6.8" fill="url(#glb)"/><path d="M14.5 6.5 q3-2 6-1" stroke="#c8a050" stroke-width="1.2" fill="none"/><text x="19" y="13.5" font-size="7" font-weight="bold" fill="#fff" text-anchor="middle" font-family="Liberation Sans" font-style="italic">IDV</text>
<g stroke="#9fd4f2" stroke-width="2.6" stroke-linecap="round" fill="none" opacity="0.9"><line x1="783" y1="13" x2="789" y2="13"/><line x1="807" y1="10" x2="807" y2="14"/><line x1="804" y1="10" x2="810" y2="10"/><line x1="807" y1="6" x2="807" y2="14"/><line x1="827.5" y1="6" x2="833.5" y2="12.5"/><line x1="833.5" y1="6" x2="827.5" y2="12.5"/></g>
<g transform="translate(11,49)"><path d="M0.5 5 L4.8 0.8 H9.5 L10.2 0 L11 0.8 L13 5 Z" fill="#a8a8d8" stroke="#2c2c6c" stroke-width="1.1" stroke-linejoin="round"/><rect x="2" y="5" width="9.5" height="5.2" fill="#a8a8d8" stroke="#2c2c6c" stroke-width="1.1"/><line x1="1" y1="10.8" x2="12.3" y2="10.8" stroke="#2c2c6c" stroke-width="1.3"/></g>
<g transform="translate(34,49)"><path d="M0.5 0.5 H6.5 L9 3 V10.5 H0.5 Z" fill="#c8c8f4" stroke="#000" stroke-width="1.1"/><path d="M6.5 0.5 L9 3" stroke="#000" stroke-width="1.5"/><g stroke="#000" stroke-width="0.9"><line x1="9.5" y1="7" x2="9.5" y2="14"/><line x1="6" y1="10.5" x2="13" y2="10.5"/><line x1="7" y1="8" x2="12" y2="13"/><line x1="12" y1="8" x2="7" y2="13"/></g><circle cx="9.5" cy="10.5" r="1.2" fill="#fff"/></g>
<g transform="translate(60,49)"><path d="M2 4 H6 L7 3 H12 V11 H2 Z" fill="#e8d8b8" stroke="#000" stroke-width="1"/><path d="M0.5 6.5 H9.5 L12.5 11 H3 Z" fill="#f0e6d0" stroke="#000" stroke-width="1"/><path d="M4 9 H10" stroke="#c08060" stroke-width="1"/><rect x="9" y="3" width="3" height="1.5" fill="#d03030"/></g>
<g transform="translate(81.5,49)"><path d="M0.5 0.5 H10 L12.5 3 V12.5 H0.5 Z" fill="#fff" stroke="#000" stroke-width="1.1"/><rect x="3" y="0.5" width="6" height="4" fill="#fff" stroke="#000" stroke-width="1"/><rect x="6.5" y="1.5" width="1.5" height="2" fill="#000"/><rect x="2.5" y="7" width="8" height="5" fill="#ddd" stroke="#000" stroke-width="1"/></g>
<g transform="translate(101.5,48)"><path d="M0.5 0.5 H10 L12.5 3 V12.5 H0.5 Z" fill="#fff" stroke="#000" stroke-width="1.1"/><rect x="3" y="0.5" width="6" height="4" fill="#fff" stroke="#000" stroke-width="1"/><rect x="6.5" y="1.5" width="1.5" height="2" fill="#000"/><rect x="2.5" y="7" width="8" height="5" fill="#ddd" stroke="#000" stroke-width="1"/><rect x="5" y="7" width="9" height="7" fill="#fff" stroke="#000" stroke-width="1.1"/><rect x="6.5" y="10" width="6" height="2" fill="#6a80c0"/></g>
<g transform="translate(123,49)"><path d="M1 0.5 L6 0.5 L6 3 L12.5 10 L9 12.5 L1 12.5 L4 9 L1 6 L4 4 Z" fill="#b8d8b8" stroke="#000" stroke-width="1"/><path d="M3 2 L8 7" stroke="#6a9a6a" stroke-width="1"/></g>
<g transform="translate(151,48)"><rect x="0.5" y="0.5" width="13" height="13" fill="#6aa86a" stroke="#000" stroke-width="1"/><rect x="2" y="2" width="10" height="10" fill="#9ac89a"/><text x="7" y="11.5" font-size="11" font-weight="bold" fill="#1a1a1a" text-anchor="middle" font-family="Liberation Sans">?</text></g>
<g transform="translate(172,48)"><circle cx="7" cy="5.5" r="5" fill="#e8e060" stroke="#000" stroke-width="1"/><circle cx="7" cy="5.5" r="2.8" fill="#f8f8c0"/><rect x="4.5" y="10" width="5" height="3.5" fill="#c8b080" stroke="#000" stroke-width="1"/><line x1="7" y1="4" x2="7" y2="9" stroke="#806020" stroke-width="1"/></g>
<g transform="translate(192.5,49)"><rect x="0.5" y="1" width="12" height="9" fill="#f0f0d0" stroke="#000" stroke-width="1"/><rect x="9.5" y="1.5" width="2" height="2" fill="#e03030"/><path d="M5 8 H11 V6 L15 9.5 L11 13 V11 H5 Z" fill="#a0a8f0" stroke="#20206a" stroke-width="0.9"/></g>
<g transform="translate(221,50)"><path d="M0.5 7.5 L7 1 H14 L7.5 7.5 Z" fill="#fff" stroke="#000" stroke-width="1.1"/><path d="M0.5 7.5 V11 H7.5 L14 4.5 V1" fill="#fff" stroke="#000" stroke-width="1.1"/><line x1="7.5" y1="7.5" x2="7.5" y2="11" stroke="#000" stroke-width="1"/></g>
<g transform="translate(242,48)"><path d="M3 0.5 L8 9 M11 0.5 L6 9" stroke="#000" stroke-width="1.3" fill="none"/><circle cx="4" cy="11.5" r="2" fill="#4040c0" stroke="#000" stroke-width="1"/><circle cx="10" cy="11.5" r="2" fill="#4040c0" stroke="#000" stroke-width="1"/></g>
<g transform="translate(270,48)"><path d="M3 3 Q0 5 2 8 Q4 10 2 12 L4 13" stroke="#000" stroke-width="1.1" fill="none"/><path d="M13 0.5 L14.5 2 L7 11 L5 12.5 L5.5 10 Z" fill="#e8c040" stroke="#000" stroke-width="1"/><path d="M12.5 1 L14 2.5" stroke="#e04040" stroke-width="1.5"/></g>
<g transform="translate(291,48)"><circle cx="7" cy="7" r="6.3" fill="url(#grn)" stroke="#000" stroke-width="1"/><path d="M5 3 Q8 5 7 8 Q5 10 8 12" stroke="#8ab0e0" stroke-width="1.8" fill="none"/></g>
<g transform="translate(319,48)"><path d="M4 0.5 H10 L13.5 4 V10 L10 13.5 H4 L0.5 10 V4 Z" fill="#c01010" stroke="#400000" stroke-width="1"/><path d="M4 2.5 H9" stroke="#e06060" stroke-width="1"/></g>
<g transform="translate(340,48)"><rect x="0.5" y="0.5" width="13" height="13" fill="#e04030" stroke="#902010" stroke-width="1"/><path d="M3.5 3.5 L10.5 10.5 M10.5 3.5 L3.5 10.5" stroke="#fff" stroke-width="2.2"/></g>
<g transform="translate(361,48)"><path d="M2 6 Q3 1 9 2 L11 1 L11 5 L7 5 L8.5 3.8 Q4.5 3 4 6.5 Z" fill="#a0a0e0" stroke="#30306a" stroke-width="0.9"/><path d="M12 8 Q11 13 5 12 L3 13 L3 9 L7 9 L5.5 10.2 Q9.5 11 10 7.5 Z" fill="#a0a0e0" stroke="#30306a" stroke-width="0.9"/></g>
<g transform="translate(398,51.5)"><path d="M2 4 H6 L7 3 H12 V11 H2 Z" fill="#e8d8b8" stroke="#000" stroke-width="1"/><path d="M0.5 6.5 H9.5 L12.5 11 H3 Z" fill="#f0e6d0" stroke="#000" stroke-width="1"/><path d="M4 9 H10" stroke="#c08060" stroke-width="1"/><rect x="9" y="3" width="3" height="1.5" fill="#d03030"/></g>
<g transform="translate(8,73)"><path d="M0.5 5 L5 0.5 H14 V9.5 L9.5 14 H0.5 Z" fill="#fff"/><path d="M2 12 L5.5 8.5 M9 6 L12.5 2.5" stroke="#d8d8d8" stroke-width="1.5"/><path d="M0.5 5 L5 0.5 H14 L9.5 5 Z" fill="#c00000"/><path d="M0.5 5 H9.5 V14 H0.5 Z M5 0.5 H14 V9.5 H5 Z M0.5 5 L5 0.5 M9.5 5 L14 0.5 M9.5 14 L14 9.5 M0.5 14 L5 9.5" fill="none" stroke="#000" stroke-width="1.3"/></g>
<g transform="translate(8,89)"><path d="M0.5 5 L5 0.5 H14 V9.5 L9.5 14 H0.5 Z" fill="#fff"/><path d="M2 12 L5.5 8.5 M9 6 L12.5 2.5" stroke="#d8d8d8" stroke-width="1.5"/><path d="M0.5 14 L5 9.5 H14 L9.5 14 Z" fill="#c00000"/><path d="M0.5 5 H9.5 V14 H0.5 Z M5 0.5 H14 V9.5 H5 Z M0.5 5 L5 0.5 M9.5 5 L14 0.5 M9.5 14 L14 9.5 M0.5 14 L5 9.5" fill="none" stroke="#000" stroke-width="1.3"/></g>
<g transform="translate(8,105)"><path d="M0.5 5 L5 0.5 H14 V9.5 L9.5 14 H0.5 Z" fill="#fff"/><path d="M2 12 L5.5 8.5 M9 6 L12.5 2.5" stroke="#d8d8d8" stroke-width="1.5"/><path d="M5 0.5 H14 V9.5 H5 Z" fill="#c00000"/><path d="M0.5 5 H9.5 V14 H0.5 Z M5 0.5 H14 V9.5 H5 Z M0.5 5 L5 0.5 M9.5 5 L14 0.5 M9.5 14 L14 9.5 M0.5 14 L5 9.5" fill="none" stroke="#000" stroke-width="1.3"/></g>
<g transform="translate(8,121)"><path d="M0.5 5 L5 0.5 H14 V9.5 L9.5 14 H0.5 Z" fill="#fff"/><path d="M2 12 L5.5 8.5 M9 6 L12.5 2.5" stroke="#d8d8d8" stroke-width="1.5"/><path d="M9.5 5 L14 0.5 V9.5 L9.5 14 Z" fill="#c00000"/><path d="M0.5 5 H9.5 V14 H0.5 Z M5 0.5 H14 V9.5 H5 Z M0.5 5 L5 0.5 M9.5 5 L14 0.5 M9.5 14 L14 9.5 M0.5 14 L5 9.5" fill="none" stroke="#000" stroke-width="1.3"/></g>
<g transform="translate(8,137)"><path d="M0.5 5 L5 0.5 H14 V9.5 L9.5 14 H0.5 Z" fill="#fff"/><path d="M2 12 L5.5 8.5 M9 6 L12.5 2.5" stroke="#d8d8d8" stroke-width="1.5"/><path d="M0.5 5 H9.5 V14 H0.5 Z" fill="#c00000"/><path d="M0.5 5 H9.5 V14 H0.5 Z M5 0.5 H14 V9.5 H5 Z M0.5 5 L5 0.5 M9.5 5 L14 0.5 M9.5 14 L14 9.5 M0.5 14 L5 9.5" fill="none" stroke="#000" stroke-width="1.3"/></g>
<g transform="translate(8,153)"><path d="M0.5 5 L5 0.5 H14 V9.5 L9.5 14 H0.5 Z" fill="#fff"/><path d="M2 12 L5.5 8.5 M9 6 L12.5 2.5" stroke="#d8d8d8" stroke-width="1.5"/><path d="M0.5 5 L5 0.5 V9.5 L0.5 14 Z" fill="#c00000"/><path d="M0.5 5 H9.5 V14 H0.5 Z M5 0.5 H14 V9.5 H5 Z M0.5 5 L5 0.5 M9.5 5 L14 0.5 M9.5 14 L14 9.5 M0.5 14 L5 9.5" fill="none" stroke="#000" stroke-width="1.3"/></g>
<g transform="translate(8,169)"><rect x="0.5" y="0.5" width="13" height="13" fill="#fff" stroke="#000" stroke-width="1.1"/><rect x="3.5" y="3.5" width="7" height="7" fill="#fff" stroke="#000" stroke-width="1.1"/><path d="M0.5 0.5 L3.5 3.5 M13.5 0.5 L10.5 3.5 M0.5 13.5 L3.5 10.5 M13.5 13.5 L10.5 10.5" stroke="#000" stroke-width="0.8"/></g>
<g transform="translate(8,185)"><path d="M1 8 H7 V14 H1 Z M7 8 L9 6 V12 L7 14 M1 8 L3 6 H9" fill="#fff" stroke="#000" stroke-width="1"/><path d="M6 3 Q12 1 13 8" stroke="#000" stroke-width="1.1" fill="none"/><path d="M5 1 L5 5 L8 3 Z M11 8 H15 L13 11 Z" fill="#000"/></g>
<g transform="translate(12,202)" stroke="#000" stroke-width="1.2" fill="none"><path d="M1 0 V13 M1 0.5 H5 M1 4 H4 M1 7.5 H5 M1 11 H4 M1 12.5 H5"/></g>
<g transform="translate(8,217)"><circle cx="6.5" cy="6.5" r="6.2" fill="url(#grn)" stroke="#000" stroke-width="0.8"/><path d="M3 6.5 H9 M7 4 L10 6.5 L7 9" stroke="#fff" stroke-width="1.8" fill="none"/></g>
<g transform="translate(8,267)"><line x1="8" y1="8" x2="12.5" y2="12.5" stroke="#000" stroke-width="3"/><line x1="8.5" y1="8.5" x2="12" y2="12" stroke="#c06020" stroke-width="1.6"/><circle cx="5" cy="5" r="4.3" fill="#c8c8e8" stroke="#303050" stroke-width="1.2"/><path d="M2.5 5 H7.5 M5 2.5 V7.5" stroke="#000" stroke-width="1.3"/></g>
<g transform="translate(8,283)"><line x1="8" y1="8" x2="12.5" y2="12.5" stroke="#000" stroke-width="3"/><line x1="8.5" y1="8.5" x2="12" y2="12" stroke="#c06020" stroke-width="1.6"/><circle cx="5" cy="5" r="4.3" fill="#c8c8e8" stroke="#303050" stroke-width="1.2"/><path d="M2.5 5 H7.5" stroke="#000" stroke-width="1.3"/></g>
<g transform="translate(8,299.5)"><path d="M0.5 5 L4.8 0.8 H9.5 L10.2 0 L11 0.8 L13 5 Z" fill="#a8a8d8" stroke="#2c2c6c" stroke-width="1.1" stroke-linejoin="round"/><rect x="2" y="5" width="9.5" height="5.2" fill="#a8a8d8" stroke="#2c2c6c" stroke-width="1.1"/><line x1="1" y1="10.8" x2="12.3" y2="10.8" stroke="#2c2c6c" stroke-width="1.3"/></g>
<path d="M18 316 L11.5 321.5 L18 327" stroke="#3a3a7a" stroke-width="3.6" fill="none"/><path d="M18 316 L11.5 321.5 L18 327" stroke="#a0a0e0" stroke-width="1.8" fill="none"/>
<path d="M12 332 L18.5 337.5 L12 343" stroke="#3a3a7a" stroke-width="3.6" fill="none"/><path d="M12 332 L18.5 337.5 L12 343" stroke="#a0a0e0" stroke-width="1.8" fill="none"/>
<path d="M9 357 L14.5 351 L20 357" stroke="#3a3a7a" stroke-width="3.6" fill="none"/><path d="M9 357 L14.5 351 L20 357" stroke="#a0a0e0" stroke-width="1.8" fill="none"/>
<path d="M9 367 L14.5 373 L20 367" stroke="#3a3a7a" stroke-width="3.6" fill="none"/><path d="M9 367 L14.5 373 L20 367" stroke="#a0a0e0" stroke-width="1.8" fill="none"/>
<path d="M11 396 Q14 393 17.5 395.5 Q20 399 17 402.5 Q14 405 11 402" stroke="#3a3a7a" stroke-width="3.6" fill="none"/><path d="M11 396 Q14 393 17.5 395.5 Q20 399 17 402.5 Q14 405 11 402" stroke="#a0a0e0" stroke-width="1.8" fill="none"/><path d="M8 400 L13 399 L11 405 Z" fill="#a0a0e0" stroke="#3a3a7a" stroke-width="0.8"/>
<path d="M11 412 Q14 409 17.5 411.5 Q20 415 17 418.5 Q14 421 11 418" stroke="#c8c8c8" stroke-width="3" fill="none"/><path d="M15 409 L20 410 L17 414 Z" fill="#c8c8c8"/>
<rect x="344.5" y="74.5" width="10" height="6" fill="#0000ff" stroke="#00008a"/>
<rect x="357.5" y="74.5" width="10" height="6" fill="#00ff00" stroke="#008a00"/>
<rect x="370.5" y="74.5" width="10" height="6" fill="#00ff00" stroke="#008a00"/>
<rect x="383.5" y="74.5" width="10" height="6" fill="#00ff00" stroke="#008a00"/>
<rect x="396.5" y="74.5" width="10" height="6" fill="#00ff00" stroke="#008a00"/>
<rect x="345.5" y="82.5" width="117" height="19" fill="#eeeeee" stroke="#7f9db9"/><rect x="346.5" y="83.5" width="115" height="17" fill="none" stroke="#fafafa"/>
<rect x="461.5" y="82.5" width="19" height="19" fill="url(#cbg)" stroke="#7f9db9"/><path d="M466 89 H476 L471 94.5 Z" fill="#222"/>
<rect x="484.5" y="83.5" width="17" height="17" fill="#eeeeee" stroke="#a8a8a8"/>
<rect x="503.5" y="83.5" width="17" height="17" fill="#eeeeee" stroke="#a8a8a8"/>
<rect x="522.5" y="83.5" width="17" height="17" fill="#eeeeee" stroke="#a8a8a8"/>
<rect x="541.5" y="83.5" width="17" height="17" fill="#eeeeee" stroke="#a8a8a8"/>
<rect x="560.5" y="83.5" width="17" height="17" fill="#eeeeee" stroke="#a8a8a8"/>
<rect x="579.5" y="83.5" width="17" height="17" fill="#eeeeee" stroke="#a8a8a8"/>
<g fill="#8080d0" stroke="#303078" stroke-width="0.8"><path d="M489 92 L494 86 V98 Z"/><path d="M494 92 L499 86 V98 Z"/><path d="M507 92 L512 86 V98 Z"/><rect x="513.5" y="86" width="2.5" height="12"/><path d="M528 86 L534 92 L528 98 Z"/><rect x="545" y="86" width="2.5" height="12"/><path d="M549 86 L554 92 L549 98 Z"/><path d="M565 86 L570 92 L565 98 Z"/><path d="M570 86 L575 92 L570 98 Z"/></g>
<circle cx="588" cy="92" r="6.3" fill="#b8b0d8" stroke="#303050" stroke-width="1.1"/><path d="M586.5 88 Q588 86.5 589.5 88 L590.5 95 H585.5 Z" fill="#eee" stroke="#303050" stroke-width="0.8"/>
<path d="M608.5 75 L604.5 79 L608.5 83 Z" fill="#5a7cc8"/><path d="M604.5 75.5 L608 75.5" stroke="#333" stroke-width="0"/><path d="M604.5 87 L608.5 91 L604.5 95 Z" fill="#5a7cc8"/><path d="M604.5 87 V95" stroke="#222" stroke-width="1"/><path d="M604.5 79 L608.5 75" stroke="#222" stroke-width="0.8"/>
<g fill="#7890b0"><rect x="606" y="83" width="1" height="1"/><rect x="608" y="85" width="1" height="1"/><rect x="606" y="87" width="1" height="1"/><rect x="608" y="89" width="1" height="1"/><rect x="606" y="91" width="1" height="1"/><rect x="608" y="93" width="1" height="1"/><rect x="606" y="95" width="1" height="1"/><rect x="608" y="97" width="1" height="1"/><rect x="606" y="99" width="1" height="1"/><rect x="608" y="101" width="1" height="1"/><rect x="606" y="103" width="1" height="1"/><rect x="608" y="105" width="1" height="1"/><rect x="606" y="107" width="1" height="1"/><rect x="608" y="109" width="1" height="1"/><rect x="606" y="111" width="1" height="1"/><rect x="608" y="113" width="1" height="1"/><rect x="606" y="115" width="1" height="1"/><rect x="608" y="117" width="1" height="1"/><rect x="606" y="119" width="1" height="1"/><rect x="608" y="121" width="1" height="1"/><rect x="606" y="123" width="1" height="1"/><rect x="608" y="125" width="1" height="1"/><rect x="606" y="127" width="1" height="1"/><rect x="608" y="129" width="1" height="1"/><rect x="606" y="131" width="1" height="1"/><rect x="608" y="133" width="1" height="1"/><rect x="606" y="135" width="1" height="1"/><rect x="608" y="137" width="1" height="1"/><rect x="606" y="139" width="1" height="1"/><rect x="608" y="141" width="1" height="1"/><rect x="606" y="143" width="1" height="1"/><rect x="608" y="145" width="1" height="1"/><rect x="606" y="147" width="1" height="1"/><rect x="608" y="149" width="1" height="1"/><rect x="606" y="151" width="1" height="1"/><rect x="608" y="153" width="1" height="1"/><rect x="606" y="155" width="1" height="1"/><rect x="608" y="157" width="1" height="1"/><rect x="606" y="159" width="1" height="1"/><rect x="608" y="161" width="1" height="1"/><rect x="606" y="163" width="1" height="1"/><rect x="608" y="165" width="1" height="1"/><rect x="606" y="167" width="1" height="1"/><rect x="608" y="169" width="1" height="1"/><rect x="606" y="171" width="1" height="1"/><rect x="608" y="173" width="1" height="1"/><rect x="606" y="175" width="1" height="1"/><rect x="608" y="177" width="1" height="1"/><rect x="606" y="179" width="1" height="1"/><rect x="608" y="181" width="1" height="1"/><rect x="606" y="183" width="1" height="1"/><rect x="608" y="185" width="1" height="1"/><rect x="606" y="187" width="1" height="1"/><rect x="608" y="189" width="1" height="1"/><rect x="606" y="191" width="1" height="1"/><rect x="608" y="193" width="1" height="1"/><rect x="606" y="195" width="1" height="1"/><rect x="608" y="197" width="1" height="1"/><rect x="606" y="199" width="1" height="1"/><rect x="608" y="201" width="1" height="1"/><rect x="606" y="203" width="1" height="1"/><rect x="608" y="205" width="1" height="1"/><rect x="606" y="207" width="1" height="1"/><rect x="608" y="209" width="1" height="1"/><rect x="606" y="211" width="1" height="1"/><rect x="608" y="213" width="1" height="1"/><rect x="606" y="215" width="1" height="1"/><rect x="608" y="217" width="1" height="1"/><rect x="606" y="219" width="1" height="1"/><rect x="608" y="221" width="1" height="1"/><rect x="606" y="223" width="1" height="1"/><rect x="608" y="225" width="1" height="1"/><rect x="606" y="227" width="1" height="1"/><rect x="608" y="229" width="1" height="1"/><rect x="606" y="231" width="1" height="1"/><rect x="608" y="233" width="1" height="1"/><rect x="606" y="235" width="1" height="1"/><rect x="608" y="237" width="1" height="1"/><rect x="606" y="239" width="1" height="1"/><rect x="608" y="241" width="1" height="1"/><rect x="606" y="243" width="1" height="1"/><rect x="608" y="245" width="1" height="1"/><rect x="606" y="247" width="1" height="1"/><rect x="608" y="249" width="1" height="1"/><rect x="606" y="251" width="1" height="1"/><rect x="608" y="253" width="1" height="1"/><rect x="606" y="255" width="1" height="1"/><rect x="608" y="257" width="1" height="1"/><rect x="606" y="259" width="1" height="1"/><rect x="608" y="261" width="1" height="1"/><rect x="606" y="263" width="1" height="1"/><rect x="608" y="265" width="1" height="1"/><rect x="606" y="267" width="1" height="1"/><rect x="608" y="269" width="1" height="1"/><rect x="606" y="271" width="1" height="1"/><rect x="608" y="273" width="1" height="1"/><rect x="606" y="275" width="1" height="1"/><rect x="608" y="277" width="1" height="1"/><rect x="606" y="279" width="1" height="1"/><rect x="608" y="281" width="1" height="1"/><rect x="606" y="283" width="1" height="1"/><rect x="608" y="285" width="1" height="1"/><rect x="606" y="287" width="1" height="1"/><rect x="608" y="289" width="1" height="1"/><rect x="606" y="291" width="1" height="1"/><rect x="608" y="293" width="1" height="1"/><rect x="606" y="295" width="1" height="1"/><rect x="608" y="297" width="1" height="1"/><rect x="606" y="299" width="1" height="1"/><rect x="608" y="301" width="1" height="1"/><rect x="606" y="303" width="1" height="1"/><rect x="608" y="305" width="1" height="1"/><rect x="606" y="307" width="1" height="1"/><rect x="608" y="309" width="1" height="1"/><rect x="606" y="311" width="1" height="1"/><rect x="608" y="313" width="1" height="1"/><rect x="606" y="315" width="1" height="1"/><rect x="608" y="317" width="1" height="1"/><rect x="606" y="319" width="1" height="1"/><rect x="608" y="321" width="1" height="1"/><rect x="606" y="323" width="1" height="1"/><rect x="608" y="325" width="1" height="1"/><rect x="606" y="327" width="1" height="1"/><rect x="608" y="329" width="1" height="1"/><rect x="606" y="331" width="1" height="1"/><rect x="608" y="333" width="1" height="1"/><rect x="606" y="335" width="1" height="1"/><rect x="608" y="337" width="1" height="1"/><rect x="606" y="339" width="1" height="1"/><rect x="608" y="341" width="1" height="1"/><rect x="606" y="343" width="1" height="1"/><rect x="608" y="345" width="1" height="1"/><rect x="606" y="347" width="1" height="1"/><rect x="608" y="349" width="1" height="1"/><rect x="606" y="351" width="1" height="1"/><rect x="608" y="353" width="1" height="1"/><rect x="606" y="355" width="1" height="1"/><rect x="608" y="357" width="1" height="1"/><rect x="606" y="359" width="1" height="1"/><rect x="608" y="361" width="1" height="1"/><rect x="606" y="363" width="1" height="1"/><rect x="608" y="365" width="1" height="1"/><rect x="606" y="367" width="1" height="1"/><rect x="608" y="369" width="1" height="1"/><rect x="606" y="371" width="1" height="1"/><rect x="608" y="373" width="1" height="1"/><rect x="606" y="375" width="1" height="1"/><rect x="608" y="377" width="1" height="1"/><rect x="606" y="379" width="1" height="1"/><rect x="608" y="381" width="1" height="1"/><rect x="606" y="383" width="1" height="1"/><rect x="608" y="385" width="1" height="1"/><rect x="606" y="387" width="1" height="1"/><rect x="608" y="389" width="1" height="1"/><rect x="606" y="391" width="1" height="1"/><rect x="608" y="393" width="1" height="1"/><rect x="606" y="395" width="1" height="1"/><rect x="608" y="397" width="1" height="1"/><rect x="606" y="399" width="1" height="1"/><rect x="608" y="401" width="1" height="1"/><rect x="606" y="403" width="1" height="1"/><rect x="608" y="405" width="1" height="1"/><rect x="606" y="407" width="1" height="1"/><rect x="608" y="409" width="1" height="1"/><rect x="606" y="411" width="1" height="1"/><rect x="608" y="413" width="1" height="1"/><rect x="606" y="415" width="1" height="1"/><rect x="608" y="417" width="1" height="1"/><rect x="606" y="419" width="1" height="1"/><rect x="608" y="421" width="1" height="1"/><rect x="606" y="423" width="1" height="1"/><rect x="608" y="425" width="1" height="1"/><rect x="606" y="427" width="1" height="1"/><rect x="608" y="429" width="1" height="1"/><rect x="606" y="431" width="1" height="1"/><rect x="608" y="433" width="1" height="1"/><rect x="606" y="435" width="1" height="1"/><rect x="608" y="437" width="1" height="1"/><rect x="606" y="439" width="1" height="1"/><rect x="608" y="441" width="1" height="1"/><rect x="606" y="443" width="1" height="1"/><rect x="608" y="445" width="1" height="1"/><rect x="606" y="447" width="1" height="1"/><rect x="608" y="449" width="1" height="1"/><rect x="606" y="451" width="1" height="1"/><rect x="608" y="453" width="1" height="1"/><rect x="606" y="455" width="1" height="1"/><rect x="608" y="457" width="1" height="1"/><rect x="606" y="459" width="1" height="1"/><rect x="608" y="461" width="1" height="1"/><rect x="606" y="463" width="1" height="1"/><rect x="608" y="465" width="1" height="1"/><rect x="606" y="467" width="1" height="1"/><rect x="608" y="469" width="1" height="1"/><rect x="606" y="471" width="1" height="1"/><rect x="608" y="473" width="1" height="1"/><rect x="606" y="475" width="1" height="1"/><rect x="608" y="477" width="1" height="1"/><rect x="606" y="479" width="1" height="1"/><rect x="608" y="481" width="1" height="1"/><rect x="606" y="483" width="1" height="1"/><rect x="608" y="485" width="1" height="1"/><rect x="606" y="487" width="1" height="1"/><rect x="608" y="489" width="1" height="1"/><rect x="606" y="491" width="1" height="1"/><rect x="608" y="493" width="1" height="1"/><rect x="606" y="495" width="1" height="1"/><rect x="608" y="497" width="1" height="1"/><rect x="606" y="499" width="1" height="1"/><rect x="608" y="501" width="1" height="1"/><rect x="606" y="503" width="1" height="1"/><rect x="608" y="505" width="1" height="1"/><rect x="606" y="507" width="1" height="1"/><rect x="608" y="509" width="1" height="1"/><rect x="606" y="511" width="1" height="1"/><rect x="608" y="513" width="1" height="1"/><rect x="606" y="515" width="1" height="1"/><rect x="608" y="517" width="1" height="1"/><rect x="606" y="519" width="1" height="1"/><rect x="608" y="521" width="1" height="1"/><rect x="606" y="523" width="1" height="1"/><rect x="608" y="525" width="1" height="1"/><rect x="606" y="527" width="1" height="1"/><rect x="608" y="529" width="1" height="1"/><rect x="606" y="531" width="1" height="1"/><rect x="608" y="533" width="1" height="1"/><rect x="606" y="535" width="1" height="1"/><rect x="608" y="537" width="1" height="1"/><rect x="606" y="539" width="1" height="1"/><rect x="608" y="541" width="1" height="1"/><rect x="606" y="543" width="1" height="1"/><rect x="608" y="545" width="1" height="1"/><rect x="606" y="547" width="1" height="1"/><rect x="608" y="549" width="1" height="1"/><rect x="606" y="551" width="1" height="1"/><rect x="608" y="553" width="1" height="1"/><rect x="606" y="555" width="1" height="1"/><rect x="608" y="557" width="1" height="1"/><rect x="606" y="559" width="1" height="1"/><rect x="608" y="561" width="1" height="1"/><rect x="606" y="563" width="1" height="1"/><rect x="608" y="565" width="1" height="1"/><rect x="606" y="567" width="1" height="1"/><rect x="608" y="569" width="1" height="1"/><rect x="606" y="571" width="1" height="1"/><rect x="608" y="573" width="1" height="1"/><rect x="606" y="575" width="1" height="1"/><rect x="608" y="577" width="1" height="1"/><rect x="606" y="579" width="1" height="1"/><rect x="608" y="581" width="1" height="1"/><rect x="606" y="583" width="1" height="1"/><rect x="608" y="585" width="1" height="1"/><rect x="606" y="587" width="1" height="1"/><rect x="608" y="589" width="1" height="1"/><rect x="606" y="591" width="1" height="1"/><rect x="608" y="593" width="1" height="1"/><rect x="606" y="595" width="1" height="1"/><rect x="608" y="597" width="1" height="1"/><rect x="606" y="599" width="1" height="1"/><rect x="608" y="601" width="1" height="1"/><rect x="606" y="603" width="1" height="1"/><rect x="608" y="605" width="1" height="1"/><rect x="606" y="607" width="1" height="1"/><rect x="608" y="609" width="1" height="1"/><rect x="606" y="611" width="1" height="1"/><rect x="608" y="613" width="1" height="1"/><rect x="606" y="615" width="1" height="1"/><rect x="608" y="617" width="1" height="1"/></g>
<rect x="617.5" y="98.5" width="8" height="8" fill="#fbf6c4" stroke="#111" stroke-width="1"/><line x1="619" y1="102.5" x2="624" y2="102.5" stroke="#111" stroke-width="1"/>
<rect x="630.5" y="96.5" width="12" height="12" fill="url(#cbg)" stroke="#7f9db9" stroke-width="1"/><path d="M633.5 102.5 L635.5 105.5 L639.5 99.5" stroke="#111" stroke-width="1.8" fill="none"/>
<rect x="620.5" y="117.5" width="8" height="8" fill="#fbf6c4" stroke="#111" stroke-width="1"/><line x1="622" y1="121.5" x2="627" y2="121.5" stroke="#111" stroke-width="1"/>
<rect x="633.5" y="114.5" width="12" height="12" fill="url(#cbg)" stroke="#7f9db9" stroke-width="1"/><path d="M636.5 120.5 L638.5 123.5 L642.5 117.5" stroke="#111" stroke-width="1.8" fill="none"/>
<rect x="617.5" y="165.5" width="8" height="8" fill="#fbf6c4" stroke="#111" stroke-width="1"/><line x1="619" y1="169.5" x2="624" y2="169.5" stroke="#111" stroke-width="1"/>
<rect x="630.5" y="164.5" width="12" height="12" fill="url(#cbg)" stroke="#7f9db9" stroke-width="1"/><path d="M633.5 170.5 L635.5 173.5 L639.5 167.5" stroke="#111" stroke-width="1.8" fill="none"/>
<rect x="620.5" y="184.5" width="8" height="8" fill="#fbf6c4" stroke="#111" stroke-width="1"/><line x1="622" y1="188.5" x2="627" y2="188.5" stroke="#111" stroke-width="1"/>
<rect x="633.5" y="183.5" width="12" height="12" fill="url(#cbg)" stroke="#7f9db9" stroke-width="1"/><path d="M636.5 189.5 L638.5 192.5 L642.5 186.5" stroke="#111" stroke-width="1.8" fill="none"/>
<g transform="translate(830,75)"><path d="M0.5 6 V11.5 H9.5 V6" stroke="#111" stroke-width="1.2" fill="none"/><path d="M5 0.5 L9 4.5 H7 V9 H3 V4.5 H1 Z" fill="#a0a8e8" stroke="#111" stroke-width="1"/></g>
<g transform="translate(802,115)" stroke="#6a4a20" fill="none" stroke-width="1.2"><path d="M6.5 0.5 V12.5 M0.5 6.5 H12.5"/><path d="M4.5 2.5 L6.5 0.5 L8.5 2.5 M4.5 10.5 L6.5 12.5 L8.5 10.5 M2.5 4.5 L0.5 6.5 L2.5 8.5 M10.5 4.5 L12.5 6.5 L10.5 8.5"/></g>
<g transform="translate(802,183)" stroke="#6a4a20" fill="none" stroke-width="1.2"><path d="M6.5 0.5 V12.5 M0.5 6.5 H12.5"/><path d="M4.5 2.5 L6.5 0.5 L8.5 2.5 M4.5 10.5 L6.5 12.5 L8.5 10.5 M2.5 4.5 L0.5 6.5 L2.5 8.5 M10.5 4.5 L12.5 6.5 L10.5 8.5"/></g>
<g transform="translate(818,117)" stroke="#111" fill="none" stroke-width="1"><rect x="0.5" y="4.5" width="7" height="5"/><path d="M2 4.5 V2.5 Q4 0 6 2.5 V4.5"/><line x1="1" y1="7" x2="7" y2="7"/></g>
<g transform="translate(818,185)" stroke="#111" fill="none" stroke-width="1"><rect x="0.5" y="4.5" width="7" height="5"/><path d="M5 4.5 V2.5 Q7 0 9.5 2.5"/><line x1="1" y1="7" x2="7" y2="7"/></g>
<g transform="translate(832,116)" stroke="#111" fill="none" stroke-width="1"><path d="M0.5 2.5 H7.5 M2.5 2.5 V0.5 H5.5 V2.5 M1.5 2.5 V10.5 H6.5 V2.5 M3 4 V9 M5 4 V9"/></g>
<g transform="translate(832,184)" stroke="#111" fill="none" stroke-width="1"><path d="M0.5 2.5 H7.5 M2.5 2.5 V0.5 H5.5 V2.5 M1.5 2.5 V10.5 H6.5 V2.5 M3 4 V9 M5 4 V9"/></g></svg>
<div class="a" id="t_combo" style="left:348px;top:85px;font-size:10.5px;letter-spacing:0.15px;color:#222;white-space:nowrap">1998-06-29 21:35:57Z</div>
</body></html>
